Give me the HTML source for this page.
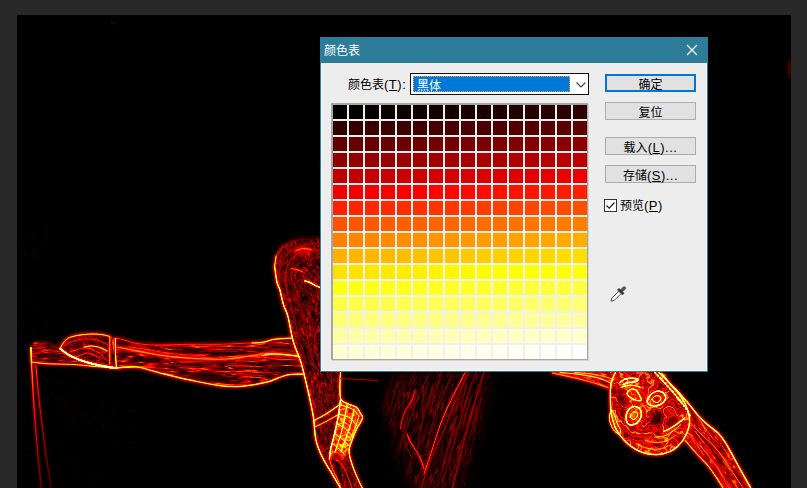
<!DOCTYPE html>
<html lang="zh-CN">
<head>
<meta charset="utf-8">
<title>颜色表</title>
<style>
html,body{margin:0;padding:0;}
body{width:807px;height:488px;overflow:hidden;background:#282828;position:relative;
  font-family:"Liberation Sans","Noto Sans CJK SC",sans-serif;font-size:12px;color:#000;}
#canvas{position:absolute;left:17px;top:15px;width:774px;height:473px;background:#000;overflow:hidden;}
#art{position:absolute;left:0;top:0;width:807px;height:488px;}
#dlg{position:absolute;left:320px;top:37px;width:386px;height:333px;border:1px solid #2d7d9a;background:#ededed;box-shadow:inset 1px 0 0 #fafafa,inset -1px 0 0 #fafafa,inset 0 -1px 0 #fafafa;}
#ttl{position:absolute;left:0;top:0;width:386px;height:25px;background:#2d7d9a;color:#fff;}
#ttl span{position:absolute;left:3px;top:5px;line-height:16px;font-size:12px;}
#ttl svg{position:absolute;left:365px;top:6px;}
.lbl{position:absolute;line-height:16px;white-space:nowrap;}
.btn{position:absolute;left:284px;width:89px;height:16px;border:1px solid #adadad;background:#e1e1e1;
  text-align:center;line-height:21px;white-space:nowrap;}
.btn.def{border:2px solid #0078d7;width:87px;height:14px;line-height:19px;}
.lat{font-size:13px;letter-spacing:0.5px;}
u{text-decoration:underline;text-underline-offset:1px;}
#sel{position:absolute;left:89px;top:35px;width:177px;height:20px;border:1px solid #111;background:#fff;}
#sel .hl{position:absolute;left:2px;top:2px;width:157px;height:16px;background:#0078d7;color:#fff;line-height:20px;overflow:hidden;
  outline:1px dotted #f0a050;outline-offset:-1px;}
#sel .hl span{padding-left:4px;}
#sel svg{position:absolute;left:165px;top:8px;}
#grid{position:absolute;left:10px;top:65px;width:258px;height:258px;border-top:2px solid #a6a6a6;border-left:2px solid #a6a6a6;
  border-right:1px solid #a6a6a6;border-bottom:1px solid #a6a6a6;background:#f0f0f0;box-sizing:border-box;width:257px !important;height:257px !important;box-shadow:1px 1px 0 #d4d4d4;}
#grid svg{position:absolute;left:0;top:0;}
#chk{position:absolute;left:283px;top:161px;width:11px;height:11px;border:1px solid #333;background:#fff;}
#chk svg{position:absolute;left:0;top:0;}
</style>
</head>
<body>
<div id="canvas"></div>
<svg id="art" width="807" height="488" viewBox="0 0 807 488">
<defs><filter id="b1" x="-20%" y="-20%" width="140%" height="140%"><feGaussianBlur stdDeviation="1"/></filter><filter id="b2" x="-20%" y="-20%" width="140%" height="140%"><feGaussianBlur stdDeviation="2.2"/></filter><filter id="b05" x="-20%" y="-20%" width="140%" height="140%"><feGaussianBlur stdDeviation="0.5"/></filter><filter id="b03" x="-20%" y="-20%" width="140%" height="140%"><feGaussianBlur stdDeviation="0.3"/></filter><clipPath id="c_vamp"><path d="M340.4 400.0 L347.8 403.7 L356.4 407.3 L362.5 418.4 L356.4 429.5 L351.5 441.8 L349.0 451.6 L341.0 463.0 L329.3 459.0 L330.6 449.0 L335.5 429.5Z"/></clipPath><clipPath id="c_tutu"><path d="M400.0 372.0 L492.0 372.0 L462.0 488.0 L415.0 488.0 L395.0 440.0 L385.0 405.0Z"/></clipPath><clipPath id="c_leg"><path d="M115.5 338.4 L119.0 338.6 L123.8 339.9 L137.2 343.6 L159.5 345.1 L189.2 344.3 L220.0 344.3 L245.0 343.2 L262.5 342.3 L274.8 339.2 L291.0 338.2 L293.2 341.2 L301.4 363.8 L303.4 374.0 L287.0 375.0 L266.5 382.2 L242.0 386.3 L221.5 385.9 L190.7 380.2 L160.0 373.0 L137.0 367.0 L116.5 368.0Z"/></clipPath><clipPath id="c_shoe"><path d="M60.2 348.7 L63.5 342.5 L69.4 337.6 L80.0 335.0 L92.0 334.0 L102.0 334.6 L109.6 336.4 L109.8 364.0 L116.5 368.2 L103.0 366.0 L90.0 363.0 L77.6 359.0 L68.0 354.5 L60.2 348.7Z"/></clipPath><clipPath id="c_toe"><path d="M31.0 348.0 L35.6 342.8 L48.0 344.0 L60.2 348.7 L68.0 354.5 L77.6 359.0 L92.0 364.0 L100.0 366.5 L78.0 364.8 L65.3 364.0 L45.0 363.6 L31.5 362.0Z"/></clipPath><clipPath id="c_body"><path d="M300.8 239.8 L291.0 242.0 L282.8 246.3 L276.2 256.1 L274.6 266.0 L277.0 282.4 L279.9 290.0 L283.6 305.0 L288.0 316.6 L293.2 341.2 L301.4 363.8 L308.4 392.6 L320.0 392.0 L320.0 239.0Z"/></clipPath><clipPath id="c_foot"><path d="M302.3 371.0 L308.4 392.6 L313.4 417.2 L315.8 439.3 L322.0 456.5 L330.6 471.3 L340.5 488.0 L362.5 488.0 L362.5 488.0 L360.0 483.6 L352.7 466.4 L349.0 451.6 L351.5 441.8 L356.4 429.5 L362.5 418.4 L360.0 412.5 L356.4 407.3 L347.8 403.7 L340.4 397.5 L340.4 372.0Z"/></clipPath><clipPath id="c_head"><path d="M615.4 372.6 C607.1 373.7 612.8 377.6 612.0 380.0 C611.2 382.4 610.9 384.5 610.6 387.3 C610.3 390.1 610.4 393.8 610.4 397.0 C610.4 400.2 610.3 403.2 610.6 406.5 C610.9 409.8 611.3 413.6 612.0 417.0 C612.7 420.4 613.8 424.1 615.0 427.0 C616.2 429.9 617.8 432.1 619.5 434.5 C621.2 436.9 623.2 439.3 625.0 441.2 C626.8 443.1 628.6 444.6 630.5 446.0 C632.4 447.4 634.7 448.8 636.6 449.9 C638.5 450.9 640.1 451.6 642.0 452.3 C643.9 453.0 645.9 453.5 648.2 453.9 C650.5 454.3 653.4 454.6 656.0 454.6 C658.6 454.6 661.1 454.3 663.6 453.7 C666.1 453.1 668.8 452.1 671.0 451.0 C673.2 449.9 675.2 448.6 677.0 447.0 C678.8 445.4 680.5 443.4 682.0 441.5 C683.5 439.6 684.7 437.5 685.7 435.4 C686.8 433.3 687.6 431.2 688.3 429.0 C688.9 426.8 689.5 424.2 689.6 422.0 C689.8 419.8 689.5 417.9 689.2 416.0 C688.9 414.1 688.4 412.5 687.7 410.4 C687.0 408.3 686.1 405.8 685.0 403.5 C683.9 401.2 682.4 399.0 681.0 396.9 C679.6 394.8 678.1 392.9 676.5 391.0 C674.9 389.1 673.0 387.2 671.3 385.3 C669.6 383.4 668.1 381.4 666.5 379.5 C664.9 377.6 670.2 374.8 661.7 373.6 C653.2 372.5 623.7 371.5 615.4 372.6Z"/></clipPath><clipPath id="c_hair"><path d="M552.0 372.0 L616.0 372.0 L612.0 380.0 L609.0 388.5 L596.0 383.5 L581.0 379.3 L566.0 376.0 L552.0 373.2Z"/></clipPath><clipPath id="c_arm"><path d="M658.9 372.6 L668.0 381.5 L677.8 391.4 L688.0 403.0 L698.0 415.4 L708.0 425.0 L718.0 433.0 L725.0 442.0 L730.7 451.9 L740.0 469.0 L750.8 488.0 L723.0 488.0 L723.0 488.0 L716.0 477.0 L708.0 465.8 L696.0 453.0 L685.3 440.6 L690.6 422.4 L687.5 406.0 L673.2 387.5Z"/></clipPath><clipPath id="c_strip"><path d="M109.8 336.4 L115.5 338.4 L116.5 368.2 L109.8 364.0Z"/></clipPath><clipPath id="c_canvas"><rect x="17" y="15" width="774" height="473"/></clipPath><filter id="fd" x="0" y="0" width="100%" height="100%" color-interpolation-filters="sRGB"><feTurbulence type="fractalNoise" baseFrequency="0.012 0.2" numOctaves="3" seed="4"/><feColorMatrix type="matrix" values="1 0 0 0 0 1 0 0 0 0 1 0 0 0 0 0 0 0 0 1"/><feComponentTransfer result="c"><feFuncR type="table" tableValues=".06 .06 .06 .06 .06 .06 .06 .06 .06 .06 .06 .06 .06 .06 .06 .06 .06 .08 .16 .24 .28 .20 .12 .06 .06 .06 .06 .06 .21 .35 .50 .35 .21 .06 .06 .06 .10 .18 .25 .24 .16 .09 .06 .06 .06 .06 .06 .06 .06 .06 .06 .06 .06 .06 .06 .06 .06 .06 .06 .06 .06"/><feFuncG type="table" tableValues=".06 .06 .06 .06 .06 .06 .06 .06 .06 .06 .06 .06 .06 .06 .06 .06 .06 .08 .16 .24 .28 .20 .12 .06 .06 .06 .06 .06 .21 .35 .50 .35 .21 .06 .06 .06 .10 .18 .25 .24 .16 .09 .06 .06 .06 .06 .06 .06 .06 .06 .06 .06 .06 .06 .06 .06 .06 .06 .06 .06 .06"/><feFuncB type="table" tableValues=".06 .06 .06 .06 .06 .06 .06 .06 .06 .06 .06 .06 .06 .06 .06 .06 .06 .08 .16 .24 .28 .20 .12 .06 .06 .06 .06 .06 .21 .35 .50 .35 .21 .06 .06 .06 .10 .18 .25 .24 .16 .09 .06 .06 .06 .06 .06 .06 .06 .06 .06 .06 .06 .06 .06 .06 .06 .06 .06 .06 .06"/></feComponentTransfer><feComposite in2="SourceGraphic" operator="in"/></filter><filter id="fdf" x="-20%" y="-20%" width="140%" height="140%" color-interpolation-filters="sRGB"><feTurbulence type="fractalNoise" baseFrequency="0.012 0.2" numOctaves="3" seed="6"/><feColorMatrix type="matrix" values="1 0 0 0 0 1 0 0 0 0 1 0 0 0 0 0 0 0 0 1"/><feComponentTransfer result="c"><feFuncR type="table" tableValues=".02 .02 .02 .02 .02 .02 .02 .02 .02 .02 .02 .02 .02 .02 .02 .02 .02 .03 .06 .10 .12 .09 .05 .02 .02 .02 .02 .02 .08 .14 .20 .14 .08 .02 .02 .02 .04 .06 .09 .08 .06 .03 .02 .02 .02 .02 .02 .02 .02 .02 .02 .02 .02 .02 .02 .02 .02 .02 .02 .02 .02"/><feFuncG type="table" tableValues=".02 .02 .02 .02 .02 .02 .02 .02 .02 .02 .02 .02 .02 .02 .02 .02 .02 .03 .06 .10 .12 .09 .05 .02 .02 .02 .02 .02 .08 .14 .20 .14 .08 .02 .02 .02 .04 .06 .09 .08 .06 .03 .02 .02 .02 .02 .02 .02 .02 .02 .02 .02 .02 .02 .02 .02 .02 .02 .02 .02 .02"/><feFuncB type="table" tableValues=".02 .02 .02 .02 .02 .02 .02 .02 .02 .02 .02 .02 .02 .02 .02 .02 .02 .03 .06 .10 .12 .09 .05 .02 .02 .02 .02 .02 .08 .14 .20 .14 .08 .02 .02 .02 .04 .06 .09 .08 .06 .03 .02 .02 .02 .02 .02 .02 .02 .02 .02 .02 .02 .02 .02 .02 .02 .02 .02 .02 .02"/></feComponentTransfer><feGaussianBlur in="SourceGraphic" stdDeviation="7" result="m"/><feComposite in="c" in2="m" operator="in"/></filter><filter id="fb" x="0" y="0" width="100%" height="100%" color-interpolation-filters="sRGB"><feTurbulence type="fractalNoise" baseFrequency="0.02 0.2" numOctaves="3" seed="9"/><feColorMatrix type="matrix" values="1 0 0 0 0 1 0 0 0 0 1 0 0 0 0 0 0 0 0 1"/><feComponentTransfer result="c"><feFuncR type="table" tableValues=".11 .11 .11 .11 .11 .11 .11 .11 .11 .11 .11 .11 .11 .11 .11 .11 .11 .15 .23 .31 .36 .28 .20 .12 .17 .24 .20 .15 .29 .42 .56 .42 .29 .17 .24 .20 .18 .27 .35 .33 .25 .17 .11 .11 .11 .11 .11 .11 .11 .11 .11 .11 .11 .11 .11 .11 .11 .11 .11 .11 .11"/><feFuncG type="table" tableValues=".11 .11 .11 .11 .11 .11 .11 .11 .11 .11 .11 .11 .11 .11 .11 .11 .11 .15 .23 .31 .36 .28 .20 .12 .17 .24 .20 .15 .29 .42 .56 .42 .29 .17 .24 .20 .18 .27 .35 .33 .25 .17 .11 .11 .11 .11 .11 .11 .11 .11 .11 .11 .11 .11 .11 .11 .11 .11 .11 .11 .11"/><feFuncB type="table" tableValues=".11 .11 .11 .11 .11 .11 .11 .11 .11 .11 .11 .11 .11 .11 .11 .11 .11 .15 .23 .31 .36 .28 .20 .12 .17 .24 .20 .15 .29 .42 .56 .42 .29 .17 .24 .20 .18 .27 .35 .33 .25 .17 .11 .11 .11 .11 .11 .11 .11 .11 .11 .11 .11 .11 .11 .11 .11 .11 .11 .11 .11"/></feComponentTransfer><feComposite in2="SourceGraphic" operator="in"/></filter><filter id="fi" x="0" y="0" width="100%" height="100%" color-interpolation-filters="sRGB"><feTurbulence type="fractalNoise" baseFrequency="0.06 0.06" numOctaves="3" seed="5"/><feColorMatrix type="matrix" values="1 0 0 0 0 1 0 0 0 0 1 0 0 0 0 0 0 0 0 1"/><feComponentTransfer result="c"><feFuncR type="table" tableValues=".16 .16 .16 .16 .16 .16 .16 .16 .16 .16 .16 .16 .16 .16 .16 .16 .16 .18 .26 .34 .38 .30 .22 .16 .22 .29 .25 .18 .31 .45 .60 .45 .31 .22 .29 .25 .21 .29 .37 .35 .27 .19 .16 .16 .16 .16 .16 .16 .16 .16 .16 .16 .16 .16 .16 .16 .16 .16 .16 .16 .16"/><feFuncG type="table" tableValues=".16 .16 .16 .16 .16 .16 .16 .16 .16 .16 .16 .16 .16 .16 .16 .16 .16 .18 .26 .34 .38 .30 .22 .16 .22 .29 .25 .18 .31 .45 .60 .45 .31 .22 .29 .25 .21 .29 .37 .35 .27 .19 .16 .16 .16 .16 .16 .16 .16 .16 .16 .16 .16 .16 .16 .16 .16 .16 .16 .16 .16"/><feFuncB type="table" tableValues=".16 .16 .16 .16 .16 .16 .16 .16 .16 .16 .16 .16 .16 .16 .16 .16 .16 .18 .26 .34 .38 .30 .22 .16 .22 .29 .25 .18 .31 .45 .60 .45 .31 .22 .29 .25 .21 .29 .37 .35 .27 .19 .16 .16 .16 .16 .16 .16 .16 .16 .16 .16 .16 .16 .16 .16 .16 .16 .16 .16 .16"/></feComponentTransfer><feComposite in2="SourceGraphic" operator="in"/></filter><filter id="fv" x="0" y="0" width="100%" height="100%" color-interpolation-filters="sRGB"><feTurbulence type="fractalNoise" baseFrequency="0.075 0.075" numOctaves="3" seed="8"/><feColorMatrix type="matrix" values="1 0 0 0 0 1 0 0 0 0 1 0 0 0 0 0 0 0 0 1"/><feComponentTransfer result="c"><feFuncR type="table" tableValues=".22 .22 .22 .22 .22 .22 .22 .22 .22 .22 .22 .22 .22 .22 .22 .22 .22 .24 .35 .46 .53 .42 .31 .22 .31 .40 .34 .25 .41 .59 .78 .59 .41 .31 .40 .34 .29 .40 .51 .48 .37 .26 .22 .22 .22 .22 .22 .22 .22 .22 .22 .22 .22 .22 .22 .22 .22 .22 .22 .22 .22"/><feFuncG type="table" tableValues=".22 .22 .22 .22 .22 .22 .22 .22 .22 .22 .22 .22 .22 .22 .22 .22 .22 .24 .35 .46 .53 .42 .31 .22 .31 .40 .34 .25 .41 .59 .78 .59 .41 .31 .40 .34 .29 .40 .51 .48 .37 .26 .22 .22 .22 .22 .22 .22 .22 .22 .22 .22 .22 .22 .22 .22 .22 .22 .22 .22 .22"/><feFuncB type="table" tableValues=".22 .22 .22 .22 .22 .22 .22 .22 .22 .22 .22 .22 .22 .22 .22 .22 .22 .24 .35 .46 .53 .42 .31 .22 .31 .40 .34 .25 .41 .59 .78 .59 .41 .31 .40 .34 .29 .40 .51 .48 .37 .26 .22 .22 .22 .22 .22 .22 .22 .22 .22 .22 .22 .22 .22 .22 .22 .22 .22 .22 .22"/></feComponentTransfer><feComposite in2="SourceGraphic" operator="in"/></filter><filter id="fs" x="0" y="0" width="100%" height="100%" color-interpolation-filters="sRGB"><feTurbulence type="fractalNoise" baseFrequency="0.04 0.13" numOctaves="3" seed="11"/><feColorMatrix type="matrix" values="1 0 0 0 0 1 0 0 0 0 1 0 0 0 0 0 0 0 0 1"/><feComponentTransfer result="c"><feFuncR type="table" tableValues=".04 .04 .04 .04 .04 .04 .04 .04 .04 .04 .04 .04 .04 .04 .04 .04 .04 .04 .09 .17 .22 .14 .05 .04 .08 .14 .11 .05 .09 .22 .36 .22 .09 .08 .14 .11 .05 .12 .21 .19 .10 .04 .04 .04 .04 .04 .04 .04 .04 .04 .04 .04 .04 .04 .04 .04 .04 .04 .04 .04 .04"/><feFuncG type="table" tableValues=".04 .04 .04 .04 .04 .04 .04 .04 .04 .04 .04 .04 .04 .04 .04 .04 .04 .04 .09 .17 .22 .14 .05 .04 .08 .14 .11 .05 .09 .22 .36 .22 .09 .08 .14 .11 .05 .12 .21 .19 .10 .04 .04 .04 .04 .04 .04 .04 .04 .04 .04 .04 .04 .04 .04 .04 .04 .04 .04 .04 .04"/><feFuncB type="table" tableValues=".04 .04 .04 .04 .04 .04 .04 .04 .04 .04 .04 .04 .04 .04 .04 .04 .04 .04 .09 .17 .22 .14 .05 .04 .08 .14 .11 .05 .09 .22 .36 .22 .09 .08 .14 .11 .05 .12 .21 .19 .10 .04 .04 .04 .04 .04 .04 .04 .04 .04 .04 .04 .04 .04 .04 .04 .04 .04 .04 .04 .04"/></feComponentTransfer><feComposite in2="SourceGraphic" operator="in"/></filter><filter id="fj" x="0" y="0" width="100%" height="100%" color-interpolation-filters="sRGB"><feTurbulence type="fractalNoise" baseFrequency="0.07 0.1" numOctaves="3" seed="2"/><feColorMatrix type="matrix" values="1 0 0 0 0 1 0 0 0 0 1 0 0 0 0 0 0 0 0 1"/><feComponentTransfer result="c"><feFuncR type="table" tableValues=".08 .08 .08 .08 .08 .08 .08 .08 .08 .08 .08 .08 .08 .08 .08 .08 .08 .10 .19 .28 .33 .24 .15 .08 .08 .08 .08 .08 .22 .36 .50 .36 .22 .08 .08 .08 .13 .22 .31 .30 .21 .12 .08 .08 .08 .08 .08 .08 .08 .08 .08 .08 .08 .08 .08 .08 .08 .08 .08 .08 .08"/><feFuncG type="table" tableValues=".08 .08 .08 .08 .08 .08 .08 .08 .08 .08 .08 .08 .08 .08 .08 .08 .08 .10 .19 .28 .33 .24 .15 .08 .08 .08 .08 .08 .22 .36 .50 .36 .22 .08 .08 .08 .13 .22 .31 .30 .21 .12 .08 .08 .08 .08 .08 .08 .08 .08 .08 .08 .08 .08 .08 .08 .08 .08 .08 .08 .08"/><feFuncB type="table" tableValues=".08 .08 .08 .08 .08 .08 .08 .08 .08 .08 .08 .08 .08 .08 .08 .08 .08 .10 .19 .28 .33 .24 .15 .08 .08 .08 .08 .08 .22 .36 .50 .36 .22 .08 .08 .08 .13 .22 .31 .30 .21 .12 .08 .08 .08 .08 .08 .08 .08 .08 .08 .08 .08 .08 .08 .08 .08 .08 .08 .08 .08"/></feComponentTransfer><feComposite in2="SourceGraphic" operator="in"/></filter><linearGradient id="pg" gradientUnits="userSpaceOnUse" x1="0" y1="347" x2="0" y2="488"><stop offset="0" stop-color="#dadada"/><stop offset="0.09" stop-color="#b5b5b5"/><stop offset="0.14" stop-color="#838383"/><stop offset="0.35" stop-color="#656565"/><stop offset="0.6" stop-color="#434343"/><stop offset="1" stop-color="#202020"/></linearGradient><linearGradient id="pg2" gradientUnits="userSpaceOnUse" x1="0" y1="347" x2="0" y2="488"><stop offset="0" stop-color="#707070"/><stop offset="0.4" stop-color="#454545"/><stop offset="1" stop-color="#151515"/></linearGradient><linearGradient id="pg3" gradientUnits="userSpaceOnUse" x1="0" y1="365" x2="0" y2="488"><stop offset="0" stop-color="#787878"/><stop offset="0.3" stop-color="#555555"/><stop offset="0.6" stop-color="#383838"/><stop offset="1" stop-color="#1b1b1b"/></linearGradient><filter id="bb" filterUnits="userSpaceOnUse" x="17" y="15" width="774" height="473" color-interpolation-filters="sRGB"><feComponentTransfer><feFuncR type="table" tableValues="0 1 1 1"/><feFuncG type="table" tableValues="0 0 1 1"/><feFuncB type="table" tableValues="0 0 0 1"/></feComponentTransfer></filter></defs><g clip-path="url(#c_canvas)"><g filter="url(#bb)"><rect x="17" y="15" width="774" height="473" fill="#000"/><g fill="none" stroke="#0f0f0f" stroke-width="0.8" opacity="0.35"><rect x="75" y="409" width="3" height="3"/><rect x="60" y="358" width="2" height="2"/><rect x="87" y="432" width="2" height="2"/><rect x="21" y="455" width="7" height="3"/><rect x="94" y="357" width="5" height="2"/><rect x="50" y="349" width="2" height="6"/><rect x="33" y="254" width="5" height="6"/><rect x="29" y="373" width="4" height="2"/><rect x="34" y="364" width="2" height="2"/><rect x="42" y="408" width="3" height="6"/><rect x="51" y="345" width="7" height="4"/><rect x="21" y="344" width="4" height="2"/><rect x="58" y="355" width="3" height="2"/><rect x="87" y="413" width="5" height="3"/><rect x="53" y="380" width="7" height="3"/><rect x="33" y="234" width="3" height="6"/><rect x="102" y="418" width="2" height="3"/><rect x="148" y="355" width="3" height="2"/><rect x="22" y="370" width="7" height="3"/><rect x="32" y="438" width="7" height="3"/><rect x="112" y="444" width="2" height="2"/><rect x="43" y="356" width="2" height="3"/><rect x="33" y="329" width="2" height="6"/><rect x="20" y="240" width="4" height="6"/><rect x="130" y="410" width="7" height="2"/><rect x="45" y="413" width="2" height="6"/><rect x="59" y="397" width="7" height="3"/><rect x="95" y="415" width="5" height="4"/><rect x="28" y="469" width="7" height="4"/><rect x="29" y="445" width="4" height="3"/><rect x="66" y="399" width="4" height="6"/><rect x="60" y="351" width="7" height="4"/><rect x="34" y="402" width="4" height="3"/><rect x="59" y="408" width="4" height="2"/><rect x="54" y="446" width="7" height="2"/><rect x="71" y="479" width="3" height="6"/><rect x="89" y="476" width="3" height="6"/><rect x="82" y="423" width="7" height="4"/><rect x="49" y="467" width="2" height="3"/><rect x="58" y="421" width="4" height="4"/><rect x="65" y="350" width="5" height="4"/><rect x="29" y="291" width="3" height="6"/><rect x="128" y="442" width="5" height="2"/><rect x="103" y="424" width="7" height="4"/><rect x="146" y="374" width="7" height="4"/><rect x="99" y="346" width="7" height="2"/><rect x="33" y="249" width="5" height="6"/><rect x="66" y="412" width="5" height="6"/><rect x="45" y="475" width="2" height="2"/><rect x="41" y="447" width="5" height="2"/><rect x="147" y="380" width="7" height="6"/><rect x="143" y="368" width="7" height="3"/><rect x="46" y="378" width="4" height="3"/><rect x="34" y="455" width="2" height="3"/><rect x="32" y="359" width="5" height="3"/><rect x="28" y="373" width="4" height="2"/><rect x="70" y="462" width="5" height="2"/><rect x="111" y="413" width="2" height="3"/><rect x="25" y="339" width="2" height="4"/><rect x="32" y="311" width="3" height="6"/><rect x="23" y="321" width="2" height="6"/><rect x="37" y="458" width="2" height="3"/><rect x="154" y="443" width="3" height="6"/><rect x="28" y="271" width="7" height="2"/><rect x="114" y="375" width="3" height="2"/><rect x="116" y="362" width="7" height="2"/><rect x="24" y="252" width="2" height="4"/><rect x="102" y="404" width="2" height="6"/><rect x="60" y="399" width="5" height="6"/><rect x="100" y="353" width="5" height="4"/><rect x="79" y="413" width="4" height="4"/><rect x="107" y="367" width="5" height="2"/><rect x="25" y="334" width="5" height="4"/><rect x="98" y="473" width="3" height="2"/><rect x="21" y="395" width="4" height="6"/><rect x="109" y="427" width="7" height="3"/><rect x="68" y="416" width="7" height="4"/><rect x="128" y="428" width="3" height="3"/><rect x="22" y="237" width="5" height="2"/><rect x="50" y="452" width="3" height="3"/><rect x="51" y="393" width="3" height="2"/><rect x="60" y="408" width="5" height="3"/><rect x="85" y="386" width="3" height="6"/><rect x="26" y="295" width="5" height="4"/><rect x="65" y="430" width="5" height="4"/><rect x="72" y="391" width="4" height="6"/><rect x="112" y="407" width="4" height="6"/><rect x="160" y="380" width="4" height="2"/><rect x="37" y="449" width="5" height="3"/><rect x="75" y="469" width="2" height="3"/></g><g filter="url(#b2)" fill="#262626" stroke="#262626" stroke-width="3"><path d="M115.5 338.4 L119.0 338.6 L123.8 339.9 L137.2 343.6 L159.5 345.1 L189.2 344.3 L220.0 344.3 L245.0 343.2 L262.5 342.3 L274.8 339.2 L291.0 338.2 L293.2 341.2 L301.4 363.8 L303.4 374.0 L287.0 375.0 L266.5 382.2 L242.0 386.3 L221.5 385.9 L190.7 380.2 L160.0 373.0 L137.0 367.0 L116.5 368.0Z"/><path d="M60.2 348.7 L63.5 342.5 L69.4 337.6 L80.0 335.0 L92.0 334.0 L102.0 334.6 L109.6 336.4 L109.8 364.0 L116.5 368.2 L103.0 366.0 L90.0 363.0 L77.6 359.0 L68.0 354.5 L60.2 348.7Z"/><path d="M31.0 348.0 L35.6 342.8 L48.0 344.0 L60.2 348.7 L68.0 354.5 L77.6 359.0 L92.0 364.0 L100.0 366.5 L78.0 364.8 L65.3 364.0 L45.0 363.6 L31.5 362.0Z"/><path d="M300.8 239.8 L291.0 242.0 L282.8 246.3 L276.2 256.1 L274.6 266.0 L277.0 282.4 L279.9 290.0 L283.6 305.0 L288.0 316.6 L293.2 341.2 L301.4 363.8 L308.4 392.6 L320.0 392.0 L320.0 239.0Z"/><path d="M302.3 371.0 L308.4 392.6 L313.4 417.2 L315.8 439.3 L322.0 456.5 L330.6 471.3 L340.5 488.0 L362.5 488.0 L362.5 488.0 L360.0 483.6 L352.7 466.4 L349.0 451.6 L351.5 441.8 L356.4 429.5 L362.5 418.4 L360.0 412.5 L356.4 407.3 L347.8 403.7 L340.4 397.5 L340.4 372.0Z"/><path d="M615.4 372.6 C607.1 373.7 612.8 377.6 612.0 380.0 C611.2 382.4 610.9 384.5 610.6 387.3 C610.3 390.1 610.4 393.8 610.4 397.0 C610.4 400.2 610.3 403.2 610.6 406.5 C610.9 409.8 611.3 413.6 612.0 417.0 C612.7 420.4 613.8 424.1 615.0 427.0 C616.2 429.9 617.8 432.1 619.5 434.5 C621.2 436.9 623.2 439.3 625.0 441.2 C626.8 443.1 628.6 444.6 630.5 446.0 C632.4 447.4 634.7 448.8 636.6 449.9 C638.5 450.9 640.1 451.6 642.0 452.3 C643.9 453.0 645.9 453.5 648.2 453.9 C650.5 454.3 653.4 454.6 656.0 454.6 C658.6 454.6 661.1 454.3 663.6 453.7 C666.1 453.1 668.8 452.1 671.0 451.0 C673.2 449.9 675.2 448.6 677.0 447.0 C678.8 445.4 680.5 443.4 682.0 441.5 C683.5 439.6 684.7 437.5 685.7 435.4 C686.8 433.3 687.6 431.2 688.3 429.0 C688.9 426.8 689.5 424.2 689.6 422.0 C689.8 419.8 689.5 417.9 689.2 416.0 C688.9 414.1 688.4 412.5 687.7 410.4 C687.0 408.3 686.1 405.8 685.0 403.5 C683.9 401.2 682.4 399.0 681.0 396.9 C679.6 394.8 678.1 392.9 676.5 391.0 C674.9 389.1 673.0 387.2 671.3 385.3 C669.6 383.4 668.1 381.4 666.5 379.5 C664.9 377.6 670.2 374.8 661.7 373.6 C653.2 372.5 623.7 371.5 615.4 372.6Z"/><path d="M552.0 372.0 L616.0 372.0 L612.0 380.0 L609.0 388.5 L596.0 383.5 L581.0 379.3 L566.0 376.0 L552.0 373.2Z"/><path d="M658.9 372.6 L668.0 381.5 L677.8 391.4 L688.0 403.0 L698.0 415.4 L708.0 425.0 L718.0 433.0 L725.0 442.0 L730.7 451.9 L740.0 469.0 L750.8 488.0 L723.0 488.0 L723.0 488.0 L716.0 477.0 L708.0 465.8 L696.0 453.0 L685.3 440.6 L690.6 422.4 L687.5 406.0 L673.2 387.5Z"/></g><g filter="url(#b1)"><path d="M115.5 338.4 L119.0 338.6 L123.8 339.9 L137.2 343.6 L159.5 345.1 L189.2 344.3 L220.0 344.3 L245.0 343.2 L262.5 342.3 L274.8 339.2 L291.0 338.2 L293.2 341.2 L301.4 363.8 L303.4 374.0 L287.0 375.0 L266.5 382.2 L242.0 386.3 L221.5 385.9 L190.7 380.2 L160.0 373.0 L137.0 367.0 L116.5 368.0Z" fill="#202020"/><path d="M60.2 348.7 L63.5 342.5 L69.4 337.6 L80.0 335.0 L92.0 334.0 L102.0 334.6 L109.6 336.4 L109.8 364.0 L116.5 368.2 L103.0 366.0 L90.0 363.0 L77.6 359.0 L68.0 354.5 L60.2 348.7Z" fill="#242424"/><path d="M31.0 348.0 L35.6 342.8 L48.0 344.0 L60.2 348.7 L68.0 354.5 L77.6 359.0 L92.0 364.0 L100.0 366.5 L78.0 364.8 L65.3 364.0 L45.0 363.6 L31.5 362.0Z" fill="#202020"/><path d="M109.8 336.4 L115.5 338.4 L116.5 368.2 L109.8 364.0Z" fill="#151515"/><path d="M300.8 239.8 L291.0 242.0 L282.8 246.3 L276.2 256.1 L274.6 266.0 L277.0 282.4 L279.9 290.0 L283.6 305.0 L288.0 316.6 L293.2 341.2 L301.4 363.8 L308.4 392.6 L320.0 392.0 L320.0 239.0Z" fill="#141414"/><path d="M302.3 371.0 L308.4 392.6 L313.4 417.2 L315.8 439.3 L322.0 456.5 L330.6 471.3 L340.5 488.0 L362.5 488.0 L362.5 488.0 L360.0 483.6 L352.7 466.4 L349.0 451.6 L351.5 441.8 L356.4 429.5 L362.5 418.4 L360.0 412.5 L356.4 407.3 L347.8 403.7 L340.4 397.5 L340.4 372.0Z" fill="#272727"/><path d="M615.4 372.6 C607.1 373.7 612.8 377.6 612.0 380.0 C611.2 382.4 610.9 384.5 610.6 387.3 C610.3 390.1 610.4 393.8 610.4 397.0 C610.4 400.2 610.3 403.2 610.6 406.5 C610.9 409.8 611.3 413.6 612.0 417.0 C612.7 420.4 613.8 424.1 615.0 427.0 C616.2 429.9 617.8 432.1 619.5 434.5 C621.2 436.9 623.2 439.3 625.0 441.2 C626.8 443.1 628.6 444.6 630.5 446.0 C632.4 447.4 634.7 448.8 636.6 449.9 C638.5 450.9 640.1 451.6 642.0 452.3 C643.9 453.0 645.9 453.5 648.2 453.9 C650.5 454.3 653.4 454.6 656.0 454.6 C658.6 454.6 661.1 454.3 663.6 453.7 C666.1 453.1 668.8 452.1 671.0 451.0 C673.2 449.9 675.2 448.6 677.0 447.0 C678.8 445.4 680.5 443.4 682.0 441.5 C683.5 439.6 684.7 437.5 685.7 435.4 C686.8 433.3 687.6 431.2 688.3 429.0 C688.9 426.8 689.5 424.2 689.6 422.0 C689.8 419.8 689.5 417.9 689.2 416.0 C688.9 414.1 688.4 412.5 687.7 410.4 C687.0 408.3 686.1 405.8 685.0 403.5 C683.9 401.2 682.4 399.0 681.0 396.9 C679.6 394.8 678.1 392.9 676.5 391.0 C674.9 389.1 673.0 387.2 671.3 385.3 C669.6 383.4 668.1 381.4 666.5 379.5 C664.9 377.6 670.2 374.8 661.7 373.6 C653.2 372.5 623.7 371.5 615.4 372.6Z" fill="#3f3f3f"/><path d="M552.0 372.0 L616.0 372.0 L612.0 380.0 L609.0 388.5 L596.0 383.5 L581.0 379.3 L566.0 376.0 L552.0 373.2Z" fill="#484848"/><path d="M658.9 372.6 L668.0 381.5 L677.8 391.4 L688.0 403.0 L698.0 415.4 L708.0 425.0 L718.0 433.0 L725.0 442.0 L730.7 451.9 L740.0 469.0 L750.8 488.0 L723.0 488.0 L723.0 488.0 L716.0 477.0 L708.0 465.8 L696.0 453.0 L685.3 440.6 L690.6 422.4 L687.5 406.0 L673.2 387.5Z" fill="#343434"/></g><path d="M400.0 372.0 L492.0 372.0 L462.0 488.0 L415.0 488.0 L395.0 440.0 L385.0 405.0Z" fill="#0b0b0b" opacity="0.5" filter="url(#b2)"/><g transform="rotate(106 440 430)" filter="url(#fdf)"><path transform="rotate(-106 440 430)" d="M400.0 372.0 L492.0 372.0 L462.0 488.0 L415.0 488.0 L395.0 440.0 L385.0 405.0Z" fill="#fff"/></g><g transform="rotate(2 200 360)" filter="url(#fd)"><path transform="rotate(-2 200 360)" d="M115.5 338.4 L119.0 338.6 L123.8 339.9 L137.2 343.6 L159.5 345.1 L189.2 344.3 L220.0 344.3 L245.0 343.2 L262.5 342.3 L274.8 339.2 L291.0 338.2 L293.2 341.2 L301.4 363.8 L303.4 374.0 L287.0 375.0 L266.5 382.2 L242.0 386.3 L221.5 385.9 L190.7 380.2 L160.0 373.0 L137.0 367.0 L116.5 368.0Z" fill="#fff"/></g><g transform="rotate(12 85 350)" filter="url(#fs)"><path transform="rotate(-12 85 350)" d="M60.2 348.7 L63.5 342.5 L69.4 337.6 L80.0 335.0 L92.0 334.0 L102.0 334.6 L109.6 336.4 L109.8 364.0 L116.5 368.2 L103.0 366.0 L90.0 363.0 L77.6 359.0 L68.0 354.5 L60.2 348.7Z" fill="#fff"/></g><g opacity="0.8"><g transform="rotate(4 60 355)" filter="url(#fd)"><path transform="rotate(-4 60 355)" d="M31.0 348.0 L35.6 342.8 L48.0 344.0 L60.2 348.7 L68.0 354.5 L77.6 359.0 L92.0 364.0 L100.0 366.5 L78.0 364.8 L65.3 364.0 L45.0 363.6 L31.5 362.0Z" fill="#fff"/></g></g><g transform="rotate(90 112 350)" filter="url(#fd)"><path transform="rotate(-90 112 350)" d="M109.8 336.4 L115.5 338.4 L116.5 368.2 L109.8 364.0Z" fill="#fff"/></g><g transform="rotate(72 300 310)" filter="url(#fs)"><path transform="rotate(-72 300 310)" d="M300.8 239.8 L291.0 242.0 L282.8 246.3 L276.2 256.1 L274.6 266.0 L277.0 282.4 L279.9 290.0 L283.6 305.0 L288.0 316.6 L293.2 341.2 L301.4 363.8 L308.4 392.6 L320.0 392.0 L320.0 239.0Z" fill="#fff"/></g><g transform="rotate(74 330 430)" filter="url(#fs)"><path transform="rotate(-74 330 430)" d="M302.3 371.0 L308.4 392.6 L313.4 417.2 L315.8 439.3 L322.0 456.5 L330.6 471.3 L340.5 488.0 L362.5 488.0 L362.5 488.0 L360.0 483.6 L352.7 466.4 L349.0 451.6 L351.5 441.8 L356.4 429.5 L362.5 418.4 L360.0 412.5 L356.4 407.3 L347.8 403.7 L340.4 397.5 L340.4 372.0Z" fill="#fff"/></g><g transform="rotate(70 345 430)" filter="url(#fv)"><path transform="rotate(-70 345 430)" d="M340.4 400.0 L347.8 403.7 L356.4 407.3 L362.5 418.4 L356.4 429.5 L351.5 441.8 L349.0 451.6 L341.0 463.0 L329.3 459.0 L330.6 449.0 L335.5 429.5Z" fill="#fff"/></g><g transform="rotate(0 650 410)" filter="url(#fi)"><path transform="rotate(0 650 410)" d="M615.4 372.6 C607.1 373.7 612.8 377.6 612.0 380.0 C611.2 382.4 610.9 384.5 610.6 387.3 C610.3 390.1 610.4 393.8 610.4 397.0 C610.4 400.2 610.3 403.2 610.6 406.5 C610.9 409.8 611.3 413.6 612.0 417.0 C612.7 420.4 613.8 424.1 615.0 427.0 C616.2 429.9 617.8 432.1 619.5 434.5 C621.2 436.9 623.2 439.3 625.0 441.2 C626.8 443.1 628.6 444.6 630.5 446.0 C632.4 447.4 634.7 448.8 636.6 449.9 C638.5 450.9 640.1 451.6 642.0 452.3 C643.9 453.0 645.9 453.5 648.2 453.9 C650.5 454.3 653.4 454.6 656.0 454.6 C658.6 454.6 661.1 454.3 663.6 453.7 C666.1 453.1 668.8 452.1 671.0 451.0 C673.2 449.9 675.2 448.6 677.0 447.0 C678.8 445.4 680.5 443.4 682.0 441.5 C683.5 439.6 684.7 437.5 685.7 435.4 C686.8 433.3 687.6 431.2 688.3 429.0 C688.9 426.8 689.5 424.2 689.6 422.0 C689.8 419.8 689.5 417.9 689.2 416.0 C688.9 414.1 688.4 412.5 687.7 410.4 C687.0 408.3 686.1 405.8 685.0 403.5 C683.9 401.2 682.4 399.0 681.0 396.9 C679.6 394.8 678.1 392.9 676.5 391.0 C674.9 389.1 673.0 387.2 671.3 385.3 C669.6 383.4 668.1 381.4 666.5 379.5 C664.9 377.6 670.2 374.8 661.7 373.6 C653.2 372.5 623.7 371.5 615.4 372.6Z" fill="#fff"/></g><g transform="rotate(14 585 378)" filter="url(#fb)"><path transform="rotate(-14 585 378)" d="M552.0 372.0 L616.0 372.0 L612.0 380.0 L609.0 388.5 L596.0 383.5 L581.0 379.3 L566.0 376.0 L552.0 373.2Z" fill="#fff"/></g><g transform="rotate(54 700 430)" filter="url(#fb)"><path transform="rotate(-54 700 430)" d="M658.9 372.6 L668.0 381.5 L677.8 391.4 L688.0 403.0 L698.0 415.4 L708.0 425.0 L718.0 433.0 L725.0 442.0 L730.7 451.9 L740.0 469.0 L750.8 488.0 L723.0 488.0 L723.0 488.0 L716.0 477.0 L708.0 465.8 L696.0 453.0 L685.3 440.6 L690.6 422.4 L687.5 406.0 L673.2 387.5Z" fill="#fff"/></g><g filter="url(#b1)"><ellipse cx="789.5" cy="69" rx="2" ry="10" fill="#181818"/><circle cx="112.7" cy="22.5" r="1.5" fill="#1b1b1b"/></g><g filter="url(#b2)"><ellipse cx="303" cy="252" rx="12" ry="6" fill="#656565" opacity="0.45"/><ellipse cx="642" cy="397" rx="15" ry="9" fill="#707070" opacity="0.35" transform="rotate(20 642 397)"/><ellipse cx="634" cy="414" rx="8" ry="9" fill="#707070" opacity="0.3"/><ellipse cx="656" cy="419" rx="8" ry="5.5" fill="#090909" opacity="0.7" transform="rotate(-20 656 419)"/><ellipse cx="622" cy="398" rx="5" ry="9" fill="#090909" opacity="0.5"/></g><g fill="none" stroke-linecap="round" stroke-linejoin="round"><g filter="url(#b1)"><path d="M303.4 374.0 C300.7 374.2 293.1 373.6 287.0 375.0 C280.9 376.4 274.0 380.3 266.5 382.2 C259.0 384.1 249.5 385.7 242.0 386.3 C234.5 386.9 230.1 386.9 221.5 385.9 C212.9 384.9 200.9 382.3 190.7 380.2 C180.4 378.1 168.9 375.2 160.0 373.0 C151.1 370.8 144.2 367.8 137.0 367.0 C129.8 366.2 119.9 367.8 116.5 368.0" stroke="#707070" stroke-width="2.5" opacity="0.75"/><path d="M115.5 338.4 C116.1 338.4 117.6 338.4 119.0 338.6 C120.4 338.9 120.8 339.1 123.8 339.9 C126.8 340.7 131.2 342.7 137.2 343.6 C143.1 344.5 150.8 345.0 159.5 345.1 C168.2 345.2 179.1 344.4 189.2 344.3 C199.3 344.2 210.7 344.5 220.0 344.3 C229.3 344.1 237.9 343.5 245.0 343.2 C252.1 342.9 257.5 343.0 262.5 342.3 C267.5 341.6 270.1 339.9 274.8 339.2 C279.6 338.5 288.3 338.4 291.0 338.2" stroke="#3b3b3b" stroke-width="2.2" opacity="0.68"/><path d="M117.8 347.3 C119.8 347.7 125.5 348.6 130.0 349.5 C134.5 350.4 137.2 351.2 144.6 352.5 C152.0 353.8 161.7 355.9 174.3 357.0 C186.9 358.1 207.1 359.4 220.0 359.2 C232.9 359.0 244.2 356.8 252.0 355.8 C259.8 354.9 261.0 353.7 266.5 353.5 C272.0 353.3 279.5 354.0 285.0 354.5 C290.5 355.0 296.9 356.2 299.3 356.6" stroke="#686868" stroke-width="4.0" opacity="0.75"/><path d="M129.7 346.8 C133.1 347.3 142.4 348.8 150.0 350.0 C157.6 351.2 165.8 353.1 175.0 354.0 C184.2 354.9 200.0 355.2 205.0 355.5" stroke="#505050" stroke-width="2.9" opacity="0.60"/><path d="M252.0 343.0 C253.8 342.9 258.7 342.9 262.5 342.3 C266.3 341.7 270.1 339.9 274.8 339.2 C279.6 338.5 288.3 338.4 291.0 338.2" stroke="#707070" stroke-width="2.3" opacity="0.75"/><path d="M262.0 355.5 C264.2 355.2 270.7 354.1 275.0 354.0 C279.3 353.9 283.9 354.6 288.0 355.0 C292.1 355.4 297.4 356.3 299.3 356.6" stroke="#707070" stroke-width="2.4" opacity="0.75"/><path d="M272.0 341.0 C271.0 342.5 268.3 346.5 266.0 350.0 C263.7 353.5 260.7 358.0 258.0 362.0 C255.3 366.0 251.8 370.3 250.0 374.0 C248.2 377.7 247.5 382.3 247.0 384.0" stroke="#2b2b2b" stroke-width="1.8" opacity="0.52"/><path d="M274.6 266.0 C275.0 268.7 276.1 278.4 277.0 282.4 C277.9 286.4 278.8 286.2 279.9 290.0 C281.0 293.8 282.2 300.6 283.6 305.0 C285.0 309.4 286.4 310.6 288.0 316.6 C289.6 322.6 291.0 333.3 293.2 341.2 C295.4 349.1 298.9 355.2 301.4 363.8 C303.9 372.4 306.4 383.7 308.4 392.6 C310.4 401.5 312.2 409.4 313.4 417.2 C314.6 425.0 314.4 432.8 315.8 439.3 C317.2 445.9 319.5 451.2 322.0 456.5 C324.5 461.8 327.5 466.1 330.6 471.3 C333.7 476.6 338.9 485.2 340.5 488.0" stroke="#737373" stroke-width="2.6" opacity="0.75"/><path d="M300.8 239.8 C299.2 240.2 294.0 240.9 291.0 242.0 C288.0 243.1 284.2 245.6 282.8 246.3" stroke="#202020" stroke-width="1.9" opacity="0.52"/><path d="M282.8 246.3 L276.2 256.1" stroke="#353535" stroke-width="2.2" opacity="0.75"/><path d="M276.2 256.1 L274.6 266.0" stroke="#6a6a6a" stroke-width="2.4" opacity="0.75"/><path d="M305.0 281.0 C305.7 281.2 307.5 281.6 309.0 282.2 C310.5 282.8 312.2 283.8 314.0 284.6 C315.8 285.5 318.8 286.9 319.7 287.3" stroke="#808080" stroke-width="2.4" opacity="0.75"/><path d="M320.0 243.0 C317.0 243.4 307.2 244.0 302.0 245.5 C296.8 247.0 292.5 249.1 289.0 252.0 C285.5 254.9 282.6 258.7 281.0 263.0 C279.4 267.3 279.8 275.5 279.5 278.0" stroke="#252525" stroke-width="1.9" opacity="0.60"/><path d="M320.0 250.0 C317.3 250.2 308.3 250.3 304.0 251.5 C299.7 252.7 296.8 254.4 294.0 257.0 C291.2 259.6 288.4 262.8 287.0 267.0 C285.6 271.2 285.3 277.2 285.5 282.0 C285.7 286.8 287.6 293.7 288.0 296.0" stroke="#2b2b2b" stroke-width="2.0" opacity="0.60"/><path d="M320.0 258.0 C317.7 258.2 309.8 257.8 306.0 259.0 C302.2 260.2 299.3 262.3 297.0 265.0 C294.7 267.7 292.7 270.8 292.0 275.0 C291.3 279.2 292.2 285.2 293.0 290.0 C293.8 294.8 296.3 301.7 297.0 304.0" stroke="#252525" stroke-width="1.7" opacity="0.56"/><path d="M296.0 250.5 C297.2 250.2 300.5 248.7 303.0 248.5 C305.5 248.3 309.7 249.3 311.0 249.5" stroke="#606060" stroke-width="2.9" opacity="0.75"/><path d="M291.0 268.5 C292.0 268.7 295.0 268.9 297.0 269.5 C299.0 270.1 302.0 271.6 303.0 272.0" stroke="#535353" stroke-width="2.4" opacity="0.75"/><path d="M300.0 276.0 C301.3 276.5 305.3 277.5 308.0 279.0 C310.7 280.5 314.0 283.2 316.0 285.0 C318.0 286.8 319.3 289.2 320.0 290.0" stroke="#252525" stroke-width="1.7" opacity="0.60"/><path d="M296.0 296.0 C297.0 298.7 300.3 306.3 302.0 312.0 C303.7 317.7 304.7 323.7 306.0 330.0 C307.3 336.3 308.5 343.7 310.0 350.0 C311.5 356.3 314.2 365.0 315.0 368.0" stroke="#202020" stroke-width="1.7" opacity="0.52"/><path d="M305.0 300.0 C306.0 303.0 309.3 311.7 311.0 318.0 C312.7 324.3 313.7 331.7 315.0 338.0 C316.3 344.3 318.3 353.0 319.0 356.0" stroke="#202020" stroke-width="1.7" opacity="0.49"/><path d="M289.0 300.0 C289.8 303.0 292.3 311.7 294.0 318.0 C295.7 324.3 297.2 331.3 299.0 338.0 C300.8 344.7 304.0 354.7 305.0 358.0" stroke="#202020" stroke-width="1.6" opacity="0.49"/><path d="M60.2 348.7 C60.8 347.7 62.0 344.4 63.5 342.5 C65.0 340.6 66.7 338.9 69.4 337.6 C72.2 336.4 76.2 335.6 80.0 335.0 C83.8 334.4 88.3 334.1 92.0 334.0 C95.7 333.9 99.1 334.2 102.0 334.6 C104.9 335.0 108.3 336.1 109.6 336.4" stroke="#707070" stroke-width="2.3" opacity="0.75"/><path d="M109.8 336.4 C109.8 338.7 109.8 345.4 109.8 350.0 C109.8 354.6 109.8 361.7 109.8 364.0" stroke="#6a6a6a" stroke-width="2.0" opacity="0.75"/><path d="M115.5 338.4 C115.5 340.7 115.2 347.0 115.4 352.0 C115.6 357.0 116.3 365.5 116.5 368.2" stroke="#707070" stroke-width="2.2" opacity="0.75"/><path d="M60.2 348.7 C61.5 349.7 65.1 352.8 68.0 354.5 C70.9 356.2 73.9 357.6 77.6 359.0 C81.3 360.4 85.8 361.8 90.0 363.0 C94.2 364.2 98.6 365.1 103.0 366.0 C107.4 366.9 114.2 367.8 116.5 368.2" stroke="#858585" stroke-width="2.9" opacity="0.75"/><path d="M31.5 362.0 C33.8 362.3 39.4 363.2 45.0 363.6 C50.6 364.0 59.5 364.0 65.3 364.2 C71.1 364.4 75.0 364.6 80.0 365.0 C85.0 365.4 88.9 366.0 95.0 366.5 C101.1 367.0 112.9 367.9 116.5 368.2" stroke="#6a6a6a" stroke-width="2.2" opacity="0.75"/><path d="M34.0 343.5 C34.3 343.4 35.1 342.9 35.6 342.8 C36.1 342.8 36.8 343.1 37.0 343.2" stroke="#3b3b3b" stroke-width="1.9" opacity="0.75"/><path d="M64.0 346.0 C65.3 345.2 68.7 342.7 72.0 341.5 C75.3 340.3 79.8 339.2 84.0 339.0 C88.2 338.8 93.0 339.0 97.0 340.0 C101.0 341.0 106.2 344.2 108.0 345.0" stroke="#3b3b3b" stroke-width="1.7" opacity="0.64"/><path d="M84.0 347.0 C85.3 346.8 89.3 345.9 92.0 346.0 C94.7 346.1 97.5 346.7 100.0 347.5 C102.5 348.3 105.8 350.4 107.0 351.0" stroke="#656565" stroke-width="2.6" opacity="0.75"/><path d="M70.0 352.0 C72.5 351.3 80.3 348.0 85.0 348.0 C89.7 348.0 94.5 350.0 98.0 352.0 C101.5 354.0 104.7 358.7 106.0 360.0" stroke="#3b3b3b" stroke-width="1.6" opacity="0.60"/><path d="M76.0 357.0 C78.0 356.3 84.2 352.8 88.0 353.0 C91.8 353.2 97.2 357.2 99.0 358.0" stroke="#3b3b3b" stroke-width="1.4" opacity="0.60"/><path d="M340.4 372.0 C340.4 376.2 339.2 392.2 340.4 397.5 C341.6 402.8 345.1 402.1 347.8 403.7 C350.5 405.3 354.4 405.8 356.4 407.3 C358.4 408.8 359.0 410.6 360.0 412.5 C361.0 414.4 363.1 415.6 362.5 418.4 C361.9 421.2 358.2 425.6 356.4 429.5 C354.6 433.4 352.7 438.1 351.5 441.8 C350.3 445.5 348.8 447.5 349.0 451.6 C349.2 455.7 350.9 461.1 352.7 466.4 C354.5 471.7 358.4 480.0 360.0 483.6 C361.6 487.2 362.1 487.3 362.5 488.0" stroke="#707070" stroke-width="2.3" opacity="0.75"/><path d="M313.4 420.9 C315.5 419.8 321.7 416.7 326.0 414.0 C330.3 411.3 337.0 406.4 339.2 404.9" stroke="#707070" stroke-width="2.3" opacity="0.75"/><path d="M314.6 427.0 C316.5 426.1 322.1 423.6 326.0 421.5 C329.9 419.4 336.0 415.8 338.0 414.7" stroke="#707070" stroke-width="2.2" opacity="0.75"/><path d="M340.4 400.0 C340.1 402.5 339.3 410.1 338.5 415.0 C337.7 419.9 336.4 425.3 335.5 429.5 C334.6 433.7 333.8 436.8 333.0 440.0 C332.2 443.2 331.2 445.8 330.6 449.0 C330.0 452.2 329.5 457.3 329.3 459.0" stroke="#757575" stroke-width="2.3" opacity="0.75"/><path d="M341.0 405.0 C342.8 405.7 349.0 407.2 352.0 409.0 C355.0 410.8 357.8 414.8 359.0 416.0" stroke="#707070" stroke-width="1.9" opacity="0.75"/><path d="M339.0 414.0 C340.8 414.7 347.0 416.0 350.0 418.0 C353.0 420.0 355.8 424.7 357.0 426.0" stroke="#707070" stroke-width="1.9" opacity="0.75"/><path d="M337.0 424.0 C338.5 424.8 343.3 426.8 346.0 429.0 C348.7 431.2 351.8 435.7 353.0 437.0" stroke="#707070" stroke-width="1.9" opacity="0.75"/><path d="M335.0 434.0 C336.2 434.8 339.7 437.0 342.0 439.0 C344.3 441.0 347.8 444.8 349.0 446.0" stroke="#707070" stroke-width="1.9" opacity="0.75"/><path d="M333.0 444.0 C334.0 444.8 337.0 447.2 339.0 449.0 C341.0 450.8 344.0 454.0 345.0 455.0" stroke="#707070" stroke-width="1.7" opacity="0.75"/><path d="M347.0 405.0 C346.5 407.7 345.2 415.7 344.0 421.0 C342.8 426.3 341.5 431.8 340.0 437.0 C338.5 442.2 335.8 449.5 335.0 452.0" stroke="#707070" stroke-width="1.9" opacity="0.75"/><path d="M354.0 409.0 C353.5 411.3 352.3 418.2 351.0 423.0 C349.7 427.8 347.7 433.2 346.0 438.0 C344.3 442.8 341.8 449.7 341.0 452.0" stroke="#707070" stroke-width="1.9" opacity="0.75"/><path d="M359.0 416.0 C358.3 418.0 356.5 424.0 355.0 428.0 C353.5 432.0 350.8 438.0 350.0 440.0" stroke="#707070" stroke-width="1.7" opacity="0.75"/><path d="M329.3 459.0 C329.9 460.8 331.6 466.5 333.0 470.0 C334.4 473.5 336.7 477.0 338.0 480.0 C339.3 483.0 340.5 486.7 341.0 488.0" stroke="#505050" stroke-width="1.9" opacity="0.75"/><path d="M341.0 463.0 C341.8 464.5 344.2 467.8 346.0 472.0 C347.8 476.2 351.0 485.3 352.0 488.0" stroke="#484848" stroke-width="1.7" opacity="0.68"/><path d="M340.4 378.5 C342.8 378.6 348.7 378.9 355.0 379.2 C361.3 379.5 374.4 380.3 378.3 380.5" stroke="#202020" stroke-width="1.9" opacity="0.64"/><path d="M465.0 372.8 C462.8 377.0 456.0 389.7 452.0 398.0 C448.0 406.3 444.3 414.0 441.0 422.7 C437.7 431.4 434.8 441.4 432.0 450.0 C429.2 458.6 425.3 470.0 424.0 474.0" stroke="#3b3b3b" stroke-width="2.2" opacity="0.75"/><path d="M469.5 371.4 C467.1 376.5 459.2 392.2 455.0 402.0 C450.8 411.8 448.2 420.0 444.0 430.0 C439.8 440.0 433.8 452.3 430.0 462.0 C426.2 471.7 422.5 483.7 421.0 488.0" stroke="#252525" stroke-width="1.9" opacity="0.60"/><path d="M483.7 372.8 C482.1 378.2 477.4 393.0 474.0 405.0 C470.6 417.0 466.6 431.2 463.0 445.0 C459.4 458.8 454.2 480.8 452.4 488.0" stroke="#252525" stroke-width="2.0" opacity="0.64"/><path d="M476.0 372.0 C474.3 376.7 469.3 389.3 466.0 400.0 C462.7 410.7 459.7 423.0 456.0 436.0 C452.3 449.0 446.0 471.0 444.0 478.0" stroke="#1b1b1b" stroke-width="1.7" opacity="0.52"/><path d="M415.0 390.0 C414.5 391.7 413.5 396.3 411.8 400.0 C410.1 403.7 406.6 408.5 405.0 412.0 C403.4 415.5 402.6 418.1 401.9 420.9 C401.1 423.7 400.7 427.6 400.5 429.0" stroke="#383838" stroke-width="1.9" opacity="0.68"/><path d="M407.0 434.0 C407.7 435.5 409.4 440.1 411.0 443.0 C412.6 445.9 415.0 448.9 416.7 451.7 C418.4 454.5 419.8 457.1 421.0 460.0 C422.2 462.9 423.5 467.4 424.0 468.9" stroke="#454545" stroke-width="2.0" opacity="0.75"/><path d="M428.0 376.0 C426.3 379.7 421.3 389.8 418.0 398.0 C414.7 406.2 410.3 418.0 408.0 425.0 C405.7 432.0 403.3 434.5 404.0 440.0 C404.7 445.5 410.7 455.0 412.0 458.0" stroke="#1b1b1b" stroke-width="1.6" opacity="0.52"/><path d="M440.0 380.0 C438.0 384.2 431.3 396.7 428.0 405.0 C424.7 413.3 421.7 421.7 420.0 430.0 C418.3 438.3 417.3 448.3 418.0 455.0 C418.7 461.7 423.0 467.5 424.0 470.0" stroke="#1b1b1b" stroke-width="1.6" opacity="0.49"/><path d="M452.0 376.0 C450.0 380.3 443.7 392.7 440.0 402.0 C436.3 411.3 432.3 423.0 430.0 432.0 C427.7 441.0 426.7 452.0 426.0 456.0" stroke="#1b1b1b" stroke-width="1.6" opacity="0.49"/><path d="M396.0 392.0 C395.0 394.2 391.7 401.0 390.0 405.0 C388.3 409.0 386.7 414.2 386.0 416.0" stroke="#151515" stroke-width="1.4" opacity="0.45"/><path d="M615.4 372.6 C614.8 373.8 612.8 377.6 612.0 380.0 C611.2 382.4 610.9 384.5 610.6 387.3 C610.3 390.1 610.4 393.8 610.4 397.0 C610.4 400.2 610.3 403.2 610.6 406.5 C610.9 409.8 611.3 413.6 612.0 417.0 C612.7 420.4 613.8 424.1 615.0 427.0 C616.2 429.9 617.8 432.1 619.5 434.5 C621.2 436.9 623.2 439.3 625.0 441.2 C626.8 443.1 628.6 444.6 630.5 446.0 C632.4 447.4 634.7 448.8 636.6 449.9 C638.5 450.9 640.1 451.6 642.0 452.3 C643.9 453.0 645.9 453.5 648.2 453.9 C650.5 454.3 653.4 454.6 656.0 454.6 C658.6 454.6 661.1 454.3 663.6 453.7 C666.1 453.1 668.8 452.1 671.0 451.0 C673.2 449.9 675.2 448.6 677.0 447.0 C678.8 445.4 680.5 443.4 682.0 441.5 C683.5 439.6 684.7 437.5 685.7 435.4 C686.8 433.3 687.6 431.2 688.3 429.0 C688.9 426.8 689.5 424.2 689.6 422.0 C689.8 419.8 689.5 417.9 689.2 416.0 C688.9 414.1 688.4 412.5 687.7 410.4 C687.0 408.3 686.1 405.8 685.0 403.5 C683.9 401.2 682.4 399.0 681.0 396.9 C679.6 394.8 678.1 392.9 676.5 391.0 C674.9 389.1 673.0 387.2 671.3 385.3 C669.6 383.4 668.1 381.4 666.5 379.5 C664.9 377.6 662.5 374.6 661.7 373.6" stroke="#787878" stroke-width="2.6" opacity="0.75"/><path d="M610.6 411.4 C610.4 412.5 609.2 415.7 609.3 418.0 C609.4 420.3 610.1 422.8 611.0 425.0 C611.9 427.2 613.1 429.5 614.5 431.0 C615.9 432.5 618.3 434.2 619.3 434.0 C620.3 433.8 620.8 431.7 620.5 430.0 C620.2 428.3 618.4 426.2 617.5 424.0 C616.6 421.8 615.8 419.2 615.0 417.0 C614.2 414.8 612.9 411.6 612.5 410.5" stroke="#787878" stroke-width="2.0" opacity="0.75"/><path d="M620.2 382.5 C620.8 382.0 622.5 380.2 624.0 379.5 C625.5 378.8 627.2 378.6 628.9 378.4 C630.6 378.2 632.4 378.1 634.0 378.3 C635.6 378.5 638.5 379.2 638.5 379.8 C638.5 380.4 635.8 381.5 634.0 382.0 C632.2 382.5 629.8 382.2 628.0 382.6 C626.2 383.0 623.8 384.2 623.0 384.5" stroke="#808080" stroke-width="2.4" opacity="0.75"/><path d="M621.2 387.6 C622.0 387.3 624.4 386.0 626.0 385.6 C627.6 385.2 629.1 385.3 630.8 385.3 C632.5 385.3 634.4 385.4 636.0 385.8 C637.6 386.2 639.8 387.3 640.5 387.6" stroke="#808080" stroke-width="2.2" opacity="0.75"/><path d="M627.0 393.5 C627.1 392.4 628.5 390.8 629.5 390.0 C630.5 389.2 631.8 388.9 633.0 389.0 C634.2 389.1 635.6 389.8 636.5 390.5 C637.4 391.2 637.7 391.9 638.5 393.5 C639.3 395.1 641.6 398.6 641.4 399.8 C641.1 401.0 638.4 400.7 637.0 400.5 C635.6 400.3 634.1 399.5 632.8 398.8 C631.5 398.1 630.0 397.4 629.0 396.5 C628.0 395.6 626.9 394.6 627.0 393.5Z" stroke="#808080" stroke-width="2.2" opacity="0.75"/><path d="M647.2 401.7 C647.1 400.2 648.3 397.6 649.5 396.0 C650.7 394.4 652.7 392.8 654.5 392.0 C656.3 391.2 658.8 391.1 660.5 391.5 C662.2 391.9 664.0 393.2 664.8 394.5 C665.6 395.8 666.0 397.5 665.5 399.0 C665.0 400.5 663.7 402.3 662.0 403.5 C660.3 404.7 657.5 405.8 655.5 406.0 C653.5 406.2 651.4 405.7 650.0 405.0 C648.6 404.3 647.3 403.2 647.2 401.7Z" stroke="#808080" stroke-width="2.4" opacity="0.75"/><path d="M652.0 399.5 C651.8 398.4 654.2 396.5 655.5 396.0 C656.8 395.5 659.2 395.8 660.0 396.5 C660.8 397.2 661.1 399.0 660.5 400.0 C659.9 401.0 657.9 402.6 656.5 402.5 C655.1 402.4 652.2 400.6 652.0 399.5Z" stroke="#808080" stroke-width="1.9" opacity="0.75"/><path d="M626.2 419.0 C626.1 417.1 626.3 413.9 627.2 412.0 C628.1 410.1 629.9 408.2 631.5 407.3 C633.1 406.4 635.5 406.3 637.0 406.8 C638.5 407.3 640.1 408.8 640.8 410.5 C641.5 412.2 641.5 415.0 641.0 417.0 C640.5 419.0 639.0 421.2 637.5 422.5 C636.0 423.8 633.6 424.8 632.0 425.0 C630.4 425.2 628.8 424.5 627.8 423.5 C626.8 422.5 626.3 420.9 626.2 419.0Z" stroke="#808080" stroke-width="2.4" opacity="0.75"/><path d="M630.3 417.0 C630.0 415.8 631.5 413.3 632.5 412.5 C633.5 411.7 635.7 411.4 636.5 412.0 C637.3 412.6 637.7 414.8 637.3 416.0 C636.9 417.2 635.2 419.3 634.0 419.5 C632.8 419.7 630.5 418.2 630.3 417.0Z" stroke="#808080" stroke-width="1.9" opacity="0.75"/><path d="M641.0 404.0 C641.7 404.6 643.9 406.2 645.0 407.5 C646.1 408.8 647.1 411.2 647.5 412.0" stroke="#757575" stroke-width="1.9" opacity="0.75"/><path d="M663.6 431.6 C664.7 431.1 667.8 429.8 670.0 428.5 C672.2 427.2 674.5 425.8 677.0 424.0 C679.5 422.2 683.5 419.0 684.8 418.0" stroke="#808080" stroke-width="2.2" opacity="0.75"/><path d="M655.0 437.0 C656.5 436.8 661.0 437.0 664.0 436.0 C667.0 435.0 670.2 432.9 673.0 431.0 C675.8 429.1 679.7 425.6 681.0 424.5" stroke="#757575" stroke-width="1.9" opacity="0.75"/><path d="M645.0 440.0 C646.7 440.4 651.5 442.3 655.0 442.5 C658.5 442.7 662.5 442.2 666.0 441.0 C669.5 439.8 674.3 436.0 676.0 435.0" stroke="#757575" stroke-width="1.7" opacity="0.75"/><path d="M636.0 444.0 C638.0 444.8 644.0 447.7 648.0 448.5 C652.0 449.3 656.3 449.6 660.0 449.0 C663.7 448.4 668.3 445.7 670.0 445.0" stroke="#757575" stroke-width="1.6" opacity="0.75"/><path d="M552.3 373.0 C554.6 373.5 561.2 374.9 566.0 376.0 C570.8 377.1 576.0 378.1 581.0 379.3 C586.0 380.6 591.6 382.1 596.0 383.5 C600.4 384.9 605.7 386.8 607.6 387.5" stroke="#6a6a6a" stroke-width="2.2" opacity="0.75"/><path d="M560.0 372.5 C563.3 372.8 573.7 373.6 580.0 374.5 C586.3 375.4 592.8 376.6 598.0 378.0 C603.2 379.4 608.8 382.2 611.0 383.0" stroke="#757575" stroke-width="1.9" opacity="0.75"/><path d="M575.0 372.5 C577.8 372.8 586.8 373.2 592.0 374.0 C597.2 374.8 602.3 376.0 606.0 377.0 C609.7 378.0 612.7 379.5 614.0 380.0" stroke="#757575" stroke-width="1.7" opacity="0.75"/><path d="M658.9 372.6 C660.4 374.1 664.9 378.4 668.0 381.5 C671.1 384.6 674.5 387.8 677.8 391.4 C681.1 395.0 684.6 399.0 688.0 403.0 C691.4 407.0 694.7 411.7 698.0 415.4 C701.3 419.1 704.7 422.1 708.0 425.0 C711.3 427.9 715.2 430.2 718.0 433.0 C720.8 435.8 722.9 438.9 725.0 442.0 C727.1 445.1 728.2 447.4 730.7 451.9 C733.2 456.4 736.6 463.0 740.0 469.0 C743.4 475.0 749.0 484.8 750.8 488.0" stroke="#737373" stroke-width="2.6" opacity="0.75"/><path d="M685.3 440.6 C687.1 442.7 692.2 448.8 696.0 453.0 C699.8 457.2 704.7 461.8 708.0 465.8 C711.3 469.8 713.5 473.3 716.0 477.0 C718.5 480.7 721.8 486.2 723.0 488.0" stroke="#737373" stroke-width="2.3" opacity="0.75"/><path d="M690.4 423.0 C692.3 425.0 697.8 430.8 702.0 435.0 C706.2 439.2 711.1 442.7 715.6 448.0 C720.1 453.3 724.4 460.3 729.0 467.0 C733.6 473.7 740.9 484.5 743.3 488.0" stroke="#4b4b4b" stroke-width="2.0" opacity="0.75"/><path d="M686.0 430.0 C688.3 432.7 695.7 441.0 700.0 446.0 C704.3 451.0 708.0 454.7 712.0 460.0 C716.0 465.3 720.8 473.3 724.0 478.0 C727.2 482.7 729.8 486.3 731.0 488.0" stroke="#4b4b4b" stroke-width="1.9" opacity="0.68"/></g><path d="M31.0 347.8 C31.1 350.7 31.1 354.5 31.6 365.0 C32.1 375.5 33.4 397.7 34.3 411.0 C35.2 424.3 35.9 432.2 37.0 445.0 C38.1 457.8 40.5 480.8 41.2 488.0" stroke="url(#pg2)" stroke-width="2.6" opacity="0.6" filter="url(#b1)"/><path d="M35.9 365.6 C36.3 370.5 37.4 384.8 38.5 395.0 C39.6 405.2 41.1 417.0 42.4 427.0 C43.6 437.0 44.5 444.8 46.0 455.0 C47.5 465.2 50.4 482.5 51.3 488.0" stroke="url(#pg2)" stroke-width="2.4" opacity="0.5" filter="url(#b1)"/><path d="M31.0 347.8 C31.1 350.7 31.1 354.5 31.6 365.0 C32.1 375.5 33.4 397.7 34.3 411.0 C35.2 424.3 35.9 432.2 37.0 445.0 C38.1 457.8 40.5 480.8 41.2 488.0" stroke="url(#pg)" stroke-width="1.5"/><path d="M35.9 365.6 C36.3 370.5 37.4 384.8 38.5 395.0 C39.6 405.2 41.1 417.0 42.4 427.0 C43.6 437.0 44.5 444.8 46.0 455.0 C47.5 465.2 50.4 482.5 51.3 488.0" stroke="url(#pg3)" stroke-width="1.2" opacity="0.9"/><g><path d="M303.4 374.0 C300.7 374.2 293.1 373.6 287.0 375.0 C280.9 376.4 274.0 380.3 266.5 382.2 C259.0 384.1 249.5 385.7 242.0 386.3 C234.5 386.9 230.1 386.9 221.5 385.9 C212.9 384.9 200.9 382.3 190.7 380.2 C180.4 378.1 168.9 375.2 160.0 373.0 C151.1 370.8 144.2 367.8 137.0 367.0 C129.8 366.2 119.9 367.8 116.5 368.0" stroke="#c5c5c5" stroke-width="1.2" opacity="1.00"/><path d="M115.5 338.4 C116.1 338.4 117.6 338.4 119.0 338.6 C120.4 338.9 120.8 339.1 123.8 339.9 C126.8 340.7 131.2 342.7 137.2 343.6 C143.1 344.5 150.8 345.0 159.5 345.1 C168.2 345.2 179.1 344.4 189.2 344.3 C199.3 344.2 210.7 344.5 220.0 344.3 C229.3 344.1 237.9 343.5 245.0 343.2 C252.1 342.9 257.5 343.0 262.5 342.3 C267.5 341.6 270.1 339.9 274.8 339.2 C279.6 338.5 288.3 338.4 291.0 338.2" stroke="#787878" stroke-width="0.9" opacity="0.90"/><path d="M117.8 347.3 C119.8 347.7 125.5 348.6 130.0 349.5 C134.5 350.4 137.2 351.2 144.6 352.5 C152.0 353.8 161.7 355.9 174.3 357.0 C186.9 358.1 207.1 359.4 220.0 359.2 C232.9 359.0 244.2 356.8 252.0 355.8 C259.8 354.9 261.0 353.7 266.5 353.5 C272.0 353.3 279.5 354.0 285.0 354.5 C290.5 355.0 296.9 356.2 299.3 356.6" stroke="#939393" stroke-width="1.0" opacity="1.00"/><path d="M129.7 346.8 C133.1 347.3 142.4 348.8 150.0 350.0 C157.6 351.2 165.8 353.1 175.0 354.0 C184.2 354.9 200.0 355.2 205.0 355.5" stroke="#787878" stroke-width="0.9" opacity="0.80"/><path d="M252.0 343.0 C253.8 342.9 258.7 342.9 262.5 342.3 C266.3 341.7 270.1 339.9 274.8 339.2 C279.6 338.5 288.3 338.4 291.0 338.2" stroke="#bdbdbd" stroke-width="1.1" opacity="1.00"/><path d="M262.0 355.5 C264.2 355.2 270.7 354.1 275.0 354.0 C279.3 353.9 283.9 354.6 288.0 355.0 C292.1 355.4 297.4 356.3 299.3 356.6" stroke="#c5c5c5" stroke-width="1.2" opacity="1.00"/><path d="M272.0 341.0 C271.0 342.5 268.3 346.5 266.0 350.0 C263.7 353.5 260.7 358.0 258.0 362.0 C255.3 366.0 251.8 370.3 250.0 374.0 C248.2 377.7 247.5 382.3 247.0 384.0" stroke="#535353" stroke-width="0.8" opacity="0.70"/><path d="M274.6 266.0 C275.0 268.7 276.1 278.4 277.0 282.4 C277.9 286.4 278.8 286.2 279.9 290.0 C281.0 293.8 282.2 300.6 283.6 305.0 C285.0 309.4 286.4 310.6 288.0 316.6 C289.6 322.6 291.0 333.3 293.2 341.2 C295.4 349.1 298.9 355.2 301.4 363.8 C303.9 372.4 306.4 383.7 308.4 392.6 C310.4 401.5 312.2 409.4 313.4 417.2 C314.6 425.0 314.4 432.8 315.8 439.3 C317.2 445.9 319.5 451.2 322.0 456.5 C324.5 461.8 327.5 466.1 330.6 471.3 C333.7 476.6 338.9 485.2 340.5 488.0" stroke="#e0e0e0" stroke-width="1.2" opacity="1.00"/><path d="M300.8 239.8 C299.2 240.2 294.0 240.9 291.0 242.0 C288.0 243.1 284.2 245.6 282.8 246.3" stroke="#3b3b3b" stroke-width="0.8" opacity="0.70"/><path d="M282.8 246.3 L276.2 256.1" stroke="#616161" stroke-width="0.9" opacity="1.00"/><path d="M276.2 256.1 L274.6 266.0" stroke="#b0b0b0" stroke-width="1.1" opacity="1.00"/><path d="M305.0 281.0 C305.7 281.2 307.5 281.6 309.0 282.2 C310.5 282.8 312.2 283.8 314.0 284.6 C315.8 285.5 318.8 286.9 319.7 287.3" stroke="#ffffff" stroke-width="1.4" opacity="1.00"/><path d="M320.0 243.0 C317.0 243.4 307.2 244.0 302.0 245.5 C296.8 247.0 292.5 249.1 289.0 252.0 C285.5 254.9 282.6 258.7 281.0 263.0 C279.4 267.3 279.8 275.5 279.5 278.0" stroke="#454545" stroke-width="0.9" opacity="0.80"/><path d="M320.0 250.0 C317.3 250.2 308.3 250.3 304.0 251.5 C299.7 252.7 296.8 254.4 294.0 257.0 C291.2 259.6 288.4 262.8 287.0 267.0 C285.6 271.2 285.3 277.2 285.5 282.0 C285.7 286.8 287.6 293.7 288.0 296.0" stroke="#585858" stroke-width="0.9" opacity="0.80"/><path d="M320.0 258.0 C317.7 258.2 309.8 257.8 306.0 259.0 C302.2 260.2 299.3 262.3 297.0 265.0 C294.7 267.7 292.7 270.8 292.0 275.0 C291.3 279.2 292.2 285.2 293.0 290.0 C293.8 294.8 296.3 301.7 297.0 304.0" stroke="#454545" stroke-width="0.8" opacity="0.75"/><path d="M296.0 250.5 C297.2 250.2 300.5 248.7 303.0 248.5 C305.5 248.3 309.7 249.3 311.0 249.5" stroke="#838383" stroke-width="1.2" opacity="1.00"/><path d="M291.0 268.5 C292.0 268.7 295.0 268.9 297.0 269.5 C299.0 270.1 302.0 271.6 303.0 272.0" stroke="#7e7e7e" stroke-width="1.1" opacity="1.00"/><path d="M300.0 276.0 C301.3 276.5 305.3 277.5 308.0 279.0 C310.7 280.5 314.0 283.2 316.0 285.0 C318.0 286.8 319.3 289.2 320.0 290.0" stroke="#4d4d4d" stroke-width="0.8" opacity="0.80"/><path d="M296.0 296.0 C297.0 298.7 300.3 306.3 302.0 312.0 C303.7 317.7 304.7 323.7 306.0 330.0 C307.3 336.3 308.5 343.7 310.0 350.0 C311.5 356.3 314.2 365.0 315.0 368.0" stroke="#454545" stroke-width="0.8" opacity="0.70"/><path d="M305.0 300.0 C306.0 303.0 309.3 311.7 311.0 318.0 C312.7 324.3 313.7 331.7 315.0 338.0 C316.3 344.3 318.3 353.0 319.0 356.0" stroke="#3f3f3f" stroke-width="0.8" opacity="0.65"/><path d="M289.0 300.0 C289.8 303.0 292.3 311.7 294.0 318.0 C295.7 324.3 297.2 331.3 299.0 338.0 C300.8 344.7 304.0 354.7 305.0 358.0" stroke="#454545" stroke-width="0.8" opacity="0.65"/><path d="M60.2 348.7 C60.8 347.7 62.0 344.4 63.5 342.5 C65.0 340.6 66.7 338.9 69.4 337.6 C72.2 336.4 76.2 335.6 80.0 335.0 C83.8 334.4 88.3 334.1 92.0 334.0 C95.7 333.9 99.1 334.2 102.0 334.6 C104.9 335.0 108.3 336.1 109.6 336.4" stroke="#bdbdbd" stroke-width="1.0" opacity="1.00"/><path d="M109.8 336.4 C109.8 338.7 109.8 345.4 109.8 350.0 C109.8 354.6 109.8 361.7 109.8 364.0" stroke="#b2b2b2" stroke-width="0.9" opacity="1.00"/><path d="M115.5 338.4 C115.5 340.7 115.2 347.0 115.4 352.0 C115.6 357.0 116.3 365.5 116.5 368.2" stroke="#dadada" stroke-width="1.1" opacity="1.00"/><path d="M60.2 348.7 C61.5 349.7 65.1 352.8 68.0 354.5 C70.9 356.2 73.9 357.6 77.6 359.0 C81.3 360.4 85.8 361.8 90.0 363.0 C94.2 364.2 98.6 365.1 103.0 366.0 C107.4 366.9 114.2 367.8 116.5 368.2" stroke="#ffffff" stroke-width="1.8" opacity="1.00"/><path d="M31.5 362.0 C33.8 362.3 39.4 363.2 45.0 363.6 C50.6 364.0 59.5 364.0 65.3 364.2 C71.1 364.4 75.0 364.6 80.0 365.0 C85.0 365.4 88.9 366.0 95.0 366.5 C101.1 367.0 112.9 367.9 116.5 368.2" stroke="#b0b0b0" stroke-width="1.0" opacity="1.00"/><path d="M34.0 343.5 C34.3 343.4 35.1 342.9 35.6 342.8 C36.1 342.8 36.8 343.1 37.0 343.2" stroke="#787878" stroke-width="1.1" opacity="1.00"/><path d="M64.0 346.0 C65.3 345.2 68.7 342.7 72.0 341.5 C75.3 340.3 79.8 339.2 84.0 339.0 C88.2 338.8 93.0 339.0 97.0 340.0 C101.0 341.0 106.2 344.2 108.0 345.0" stroke="#7e7e7e" stroke-width="0.8" opacity="0.85"/><path d="M84.0 347.0 C85.3 346.8 89.3 345.9 92.0 346.0 C94.7 346.1 97.5 346.7 100.0 347.5 C102.5 348.3 105.8 350.4 107.0 351.0" stroke="#b5b5b5" stroke-width="1.2" opacity="1.00"/><path d="M70.0 352.0 C72.5 351.3 80.3 348.0 85.0 348.0 C89.7 348.0 94.5 350.0 98.0 352.0 C101.5 354.0 104.7 358.7 106.0 360.0" stroke="#a0a0a0" stroke-width="0.7" opacity="0.80"/><path d="M76.0 357.0 C78.0 356.3 84.2 352.8 88.0 353.0 C91.8 353.2 97.2 357.2 99.0 358.0" stroke="#aaaaaa" stroke-width="0.7" opacity="0.80"/><path d="M340.4 372.0 C340.4 376.2 339.2 392.2 340.4 397.5 C341.6 402.8 345.1 402.1 347.8 403.7 C350.5 405.3 354.4 405.8 356.4 407.3 C358.4 408.8 359.0 410.6 360.0 412.5 C361.0 414.4 363.1 415.6 362.5 418.4 C361.9 421.2 358.2 425.6 356.4 429.5 C354.6 433.4 352.7 438.1 351.5 441.8 C350.3 445.5 348.8 447.5 349.0 451.6 C349.2 455.7 350.9 461.1 352.7 466.4 C354.5 471.7 358.4 480.0 360.0 483.6 C361.6 487.2 362.1 487.3 362.5 488.0" stroke="#dadada" stroke-width="1.1" opacity="1.00"/><path d="M313.4 420.9 C315.5 419.8 321.7 416.7 326.0 414.0 C330.3 411.3 337.0 406.4 339.2 404.9" stroke="#c0c0c0" stroke-width="1.1" opacity="1.00"/><path d="M314.6 427.0 C316.5 426.1 322.1 423.6 326.0 421.5 C329.9 419.4 336.0 415.8 338.0 414.7" stroke="#b5b5b5" stroke-width="1.0" opacity="1.00"/><path d="M340.4 400.0 C340.1 402.5 339.3 410.1 338.5 415.0 C337.7 419.9 336.4 425.3 335.5 429.5 C334.6 433.7 333.8 436.8 333.0 440.0 C332.2 443.2 331.2 445.8 330.6 449.0 C330.0 452.2 329.5 457.3 329.3 459.0" stroke="#ffffff" stroke-width="1.2" opacity="1.00"/><path d="M341.0 405.0 C342.8 405.7 349.0 407.2 352.0 409.0 C355.0 410.8 357.8 414.8 359.0 416.0" stroke="#cdcdcd" stroke-width="0.9" opacity="1.00"/><path d="M339.0 414.0 C340.8 414.7 347.0 416.0 350.0 418.0 C353.0 420.0 355.8 424.7 357.0 426.0" stroke="#cdcdcd" stroke-width="0.9" opacity="1.00"/><path d="M337.0 424.0 C338.5 424.8 343.3 426.8 346.0 429.0 C348.7 431.2 351.8 435.7 353.0 437.0" stroke="#cdcdcd" stroke-width="0.9" opacity="1.00"/><path d="M335.0 434.0 C336.2 434.8 339.7 437.0 342.0 439.0 C344.3 441.0 347.8 444.8 349.0 446.0" stroke="#cdcdcd" stroke-width="0.9" opacity="1.00"/><path d="M333.0 444.0 C334.0 444.8 337.0 447.2 339.0 449.0 C341.0 450.8 344.0 454.0 345.0 455.0" stroke="#bdbdbd" stroke-width="0.9" opacity="1.00"/><path d="M347.0 405.0 C346.5 407.7 345.2 415.7 344.0 421.0 C342.8 426.3 341.5 431.8 340.0 437.0 C338.5 442.2 335.8 449.5 335.0 452.0" stroke="#e6e6e6" stroke-width="0.9" opacity="1.00"/><path d="M354.0 409.0 C353.5 411.3 352.3 418.2 351.0 423.0 C349.7 427.8 347.7 433.2 346.0 438.0 C344.3 442.8 341.8 449.7 341.0 452.0" stroke="#e6e6e6" stroke-width="0.9" opacity="1.00"/><path d="M359.0 416.0 C358.3 418.0 356.5 424.0 355.0 428.0 C353.5 432.0 350.8 438.0 350.0 440.0" stroke="#bdbdbd" stroke-width="0.9" opacity="1.00"/><path d="M329.3 459.0 C329.9 460.8 331.6 466.5 333.0 470.0 C334.4 473.5 336.7 477.0 338.0 480.0 C339.3 483.0 340.5 486.7 341.0 488.0" stroke="#939393" stroke-width="0.9" opacity="1.00"/><path d="M341.0 463.0 C341.8 464.5 344.2 467.8 346.0 472.0 C347.8 476.2 351.0 485.3 352.0 488.0" stroke="#838383" stroke-width="0.8" opacity="0.90"/><path d="M340.4 378.5 C342.8 378.6 348.7 378.9 355.0 379.2 C361.3 379.5 374.4 380.3 378.3 380.5" stroke="#484848" stroke-width="0.9" opacity="0.85"/><path d="M465.0 372.8 C462.8 377.0 456.0 389.7 452.0 398.0 C448.0 406.3 444.3 414.0 441.0 422.7 C437.7 431.4 434.8 441.4 432.0 450.0 C429.2 458.6 425.3 470.0 424.0 474.0" stroke="#838383" stroke-width="0.9" opacity="1.00"/><path d="M469.5 371.4 C467.1 376.5 459.2 392.2 455.0 402.0 C450.8 411.8 448.2 420.0 444.0 430.0 C439.8 440.0 433.8 452.3 430.0 462.0 C426.2 471.7 422.5 483.7 421.0 488.0" stroke="#505050" stroke-width="0.8" opacity="0.80"/><path d="M483.7 372.8 C482.1 378.2 477.4 393.0 474.0 405.0 C470.6 417.0 466.6 431.2 463.0 445.0 C459.4 458.8 454.2 480.8 452.4 488.0" stroke="#484848" stroke-width="0.9" opacity="0.85"/><path d="M476.0 372.0 C474.3 376.7 469.3 389.3 466.0 400.0 C462.7 410.7 459.7 423.0 456.0 436.0 C452.3 449.0 446.0 471.0 444.0 478.0" stroke="#3b3b3b" stroke-width="0.8" opacity="0.70"/><path d="M415.0 390.0 C414.5 391.7 413.5 396.3 411.8 400.0 C410.1 403.7 406.6 408.5 405.0 412.0 C403.4 415.5 402.6 418.1 401.9 420.9 C401.1 423.7 400.7 427.6 400.5 429.0" stroke="#707070" stroke-width="0.9" opacity="0.90"/><path d="M407.0 434.0 C407.7 435.5 409.4 440.1 411.0 443.0 C412.6 445.9 415.0 448.9 416.7 451.7 C418.4 454.5 419.8 457.1 421.0 460.0 C422.2 462.9 423.5 467.4 424.0 468.9" stroke="#838383" stroke-width="0.9" opacity="1.00"/><path d="M428.0 376.0 C426.3 379.7 421.3 389.8 418.0 398.0 C414.7 406.2 410.3 418.0 408.0 425.0 C405.7 432.0 403.3 434.5 404.0 440.0 C404.7 445.5 410.7 455.0 412.0 458.0" stroke="#414141" stroke-width="0.7" opacity="0.70"/><path d="M440.0 380.0 C438.0 384.2 431.3 396.7 428.0 405.0 C424.7 413.3 421.7 421.7 420.0 430.0 C418.3 438.3 417.3 448.3 418.0 455.0 C418.7 461.7 423.0 467.5 424.0 470.0" stroke="#3b3b3b" stroke-width="0.7" opacity="0.65"/><path d="M452.0 376.0 C450.0 380.3 443.7 392.7 440.0 402.0 C436.3 411.3 432.3 423.0 430.0 432.0 C427.7 441.0 426.7 452.0 426.0 456.0" stroke="#414141" stroke-width="0.7" opacity="0.65"/><path d="M396.0 392.0 C395.0 394.2 391.7 401.0 390.0 405.0 C388.3 409.0 386.7 414.2 386.0 416.0" stroke="#343434" stroke-width="0.7" opacity="0.60"/><path d="M615.4 372.6 C614.8 373.8 612.8 377.6 612.0 380.0 C611.2 382.4 610.9 384.5 610.6 387.3 C610.3 390.1 610.4 393.8 610.4 397.0 C610.4 400.2 610.3 403.2 610.6 406.5 C610.9 409.8 611.3 413.6 612.0 417.0 C612.7 420.4 613.8 424.1 615.0 427.0 C616.2 429.9 617.8 432.1 619.5 434.5 C621.2 436.9 623.2 439.3 625.0 441.2 C626.8 443.1 628.6 444.6 630.5 446.0 C632.4 447.4 634.7 448.8 636.6 449.9 C638.5 450.9 640.1 451.6 642.0 452.3 C643.9 453.0 645.9 453.5 648.2 453.9 C650.5 454.3 653.4 454.6 656.0 454.6 C658.6 454.6 661.1 454.3 663.6 453.7 C666.1 453.1 668.8 452.1 671.0 451.0 C673.2 449.9 675.2 448.6 677.0 447.0 C678.8 445.4 680.5 443.4 682.0 441.5 C683.5 439.6 684.7 437.5 685.7 435.4 C686.8 433.3 687.6 431.2 688.3 429.0 C688.9 426.8 689.5 424.2 689.6 422.0 C689.8 419.8 689.5 417.9 689.2 416.0 C688.9 414.1 688.4 412.5 687.7 410.4 C687.0 408.3 686.1 405.8 685.0 403.5 C683.9 401.2 682.4 399.0 681.0 396.9 C679.6 394.8 678.1 392.9 676.5 391.0 C674.9 389.1 673.0 387.2 671.3 385.3 C669.6 383.4 668.1 381.4 666.5 379.5 C664.9 377.6 662.5 374.6 661.7 373.6" stroke="#e6e6e6" stroke-width="1.2" opacity="1.00"/><path d="M610.6 411.4 C610.4 412.5 609.2 415.7 609.3 418.0 C609.4 420.3 610.1 422.8 611.0 425.0 C611.9 427.2 613.1 429.5 614.5 431.0 C615.9 432.5 618.3 434.2 619.3 434.0 C620.3 433.8 620.8 431.7 620.5 430.0 C620.2 428.3 618.4 426.2 617.5 424.0 C616.6 421.8 615.8 419.2 615.0 417.0 C614.2 414.8 612.9 411.6 612.5 410.5" stroke="#dadada" stroke-width="0.9" opacity="1.00"/><path d="M620.2 382.5 C620.8 382.0 622.5 380.2 624.0 379.5 C625.5 378.8 627.2 378.6 628.9 378.4 C630.6 378.2 632.4 378.1 634.0 378.3 C635.6 378.5 638.5 379.2 638.5 379.8 C638.5 380.4 635.8 381.5 634.0 382.0 C632.2 382.5 629.8 382.2 628.0 382.6 C626.2 383.0 623.8 384.2 623.0 384.5" stroke="#ffffff" stroke-width="1.3" opacity="1.00"/><path d="M621.2 387.6 C622.0 387.3 624.4 386.0 626.0 385.6 C627.6 385.2 629.1 385.3 630.8 385.3 C632.5 385.3 634.4 385.4 636.0 385.8 C637.6 386.2 639.8 387.3 640.5 387.6" stroke="#e0e0e0" stroke-width="1.1" opacity="1.00"/><path d="M627.0 393.5 C627.1 392.4 628.5 390.8 629.5 390.0 C630.5 389.2 631.8 388.9 633.0 389.0 C634.2 389.1 635.6 389.8 636.5 390.5 C637.4 391.2 637.7 391.9 638.5 393.5 C639.3 395.1 641.6 398.6 641.4 399.8 C641.1 401.0 638.4 400.7 637.0 400.5 C635.6 400.3 634.1 399.5 632.8 398.8 C631.5 398.1 630.0 397.4 629.0 396.5 C628.0 395.6 626.9 394.6 627.0 393.5Z" stroke="#dadada" stroke-width="1.2" opacity="1.00"/><path d="M647.2 401.7 C647.1 400.2 648.3 397.6 649.5 396.0 C650.7 394.4 652.7 392.8 654.5 392.0 C656.3 391.2 658.8 391.1 660.5 391.5 C662.2 391.9 664.0 393.2 664.8 394.5 C665.6 395.8 666.0 397.5 665.5 399.0 C665.0 400.5 663.7 402.3 662.0 403.5 C660.3 404.7 657.5 405.8 655.5 406.0 C653.5 406.2 651.4 405.7 650.0 405.0 C648.6 404.3 647.3 403.2 647.2 401.7Z" stroke="#ffffff" stroke-width="1.3" opacity="1.00"/><path d="M652.0 399.5 C651.8 398.4 654.2 396.5 655.5 396.0 C656.8 395.5 659.2 395.8 660.0 396.5 C660.8 397.2 661.1 399.0 660.5 400.0 C659.9 401.0 657.9 402.6 656.5 402.5 C655.1 402.4 652.2 400.6 652.0 399.5Z" stroke="#dadada" stroke-width="1.0" opacity="1.00"/><path d="M626.2 419.0 C626.1 417.1 626.3 413.9 627.2 412.0 C628.1 410.1 629.9 408.2 631.5 407.3 C633.1 406.4 635.5 406.3 637.0 406.8 C638.5 407.3 640.1 408.8 640.8 410.5 C641.5 412.2 641.5 415.0 641.0 417.0 C640.5 419.0 639.0 421.2 637.5 422.5 C636.0 423.8 633.6 424.8 632.0 425.0 C630.4 425.2 628.8 424.5 627.8 423.5 C626.8 422.5 626.3 420.9 626.2 419.0Z" stroke="#ffffff" stroke-width="1.3" opacity="1.00"/><path d="M630.3 417.0 C630.0 415.8 631.5 413.3 632.5 412.5 C633.5 411.7 635.7 411.4 636.5 412.0 C637.3 412.6 637.7 414.8 637.3 416.0 C636.9 417.2 635.2 419.3 634.0 419.5 C632.8 419.7 630.5 418.2 630.3 417.0Z" stroke="#dadada" stroke-width="1.0" opacity="1.00"/><path d="M641.0 404.0 C641.7 404.6 643.9 406.2 645.0 407.5 C646.1 408.8 647.1 411.2 647.5 412.0" stroke="#aaaaaa" stroke-width="0.9" opacity="1.00"/><path d="M663.6 431.6 C664.7 431.1 667.8 429.8 670.0 428.5 C672.2 427.2 674.5 425.8 677.0 424.0 C679.5 422.2 683.5 419.0 684.8 418.0" stroke="#ededed" stroke-width="1.2" opacity="1.00"/><path d="M655.0 437.0 C656.5 436.8 661.0 437.0 664.0 436.0 C667.0 435.0 670.2 432.9 673.0 431.0 C675.8 429.1 679.7 425.6 681.0 424.5" stroke="#bdbdbd" stroke-width="0.9" opacity="1.00"/><path d="M645.0 440.0 C646.7 440.4 651.5 442.3 655.0 442.5 C658.5 442.7 662.5 442.2 666.0 441.0 C669.5 439.8 674.3 436.0 676.0 435.0" stroke="#aaaaaa" stroke-width="0.8" opacity="1.00"/><path d="M636.0 444.0 C638.0 444.8 644.0 447.7 648.0 448.5 C652.0 449.3 656.3 449.6 660.0 449.0 C663.7 448.4 668.3 445.7 670.0 445.0" stroke="#aaaaaa" stroke-width="0.8" opacity="1.00"/><path d="M552.3 373.0 C554.6 373.5 561.2 374.9 566.0 376.0 C570.8 377.1 576.0 378.1 581.0 379.3 C586.0 380.6 591.6 382.1 596.0 383.5 C600.4 384.9 605.7 386.8 607.6 387.5" stroke="#a0a0a0" stroke-width="0.9" opacity="1.00"/><path d="M560.0 372.5 C563.3 372.8 573.7 373.6 580.0 374.5 C586.3 375.4 592.8 376.6 598.0 378.0 C603.2 379.4 608.8 382.2 611.0 383.0" stroke="#c5c5c5" stroke-width="0.9" opacity="1.00"/><path d="M575.0 372.5 C577.8 372.8 586.8 373.2 592.0 374.0 C597.2 374.8 602.3 376.0 606.0 377.0 C609.7 378.0 612.7 379.5 614.0 380.0" stroke="#b5b5b5" stroke-width="0.8" opacity="1.00"/><path d="M658.9 372.6 C660.4 374.1 664.9 378.4 668.0 381.5 C671.1 384.6 674.5 387.8 677.8 391.4 C681.1 395.0 684.6 399.0 688.0 403.0 C691.4 407.0 694.7 411.7 698.0 415.4 C701.3 419.1 704.7 422.1 708.0 425.0 C711.3 427.9 715.2 430.2 718.0 433.0 C720.8 435.8 722.9 438.9 725.0 442.0 C727.1 445.1 728.2 447.4 730.7 451.9 C733.2 456.4 736.6 463.0 740.0 469.0 C743.4 475.0 749.0 484.8 750.8 488.0" stroke="#e0e0e0" stroke-width="1.2" opacity="1.00"/><path d="M685.3 440.6 C687.1 442.7 692.2 448.8 696.0 453.0 C699.8 457.2 704.7 461.8 708.0 465.8 C711.3 469.8 713.5 473.3 716.0 477.0 C718.5 480.7 721.8 486.2 723.0 488.0" stroke="#cdcdcd" stroke-width="1.0" opacity="1.00"/><path d="M690.4 423.0 C692.3 425.0 697.8 430.8 702.0 435.0 C706.2 439.2 711.1 442.7 715.6 448.0 C720.1 453.3 724.4 460.3 729.0 467.0 C733.6 473.7 740.9 484.5 743.3 488.0" stroke="#939393" stroke-width="0.9" opacity="1.00"/><path d="M686.0 430.0 C688.3 432.7 695.7 441.0 700.0 446.0 C704.3 451.0 708.0 454.7 712.0 460.0 C716.0 465.3 720.8 473.3 724.0 478.0 C727.2 482.7 729.8 486.3 731.0 488.0" stroke="#838383" stroke-width="0.8" opacity="0.90"/><path d="M655.0 372.6 C656.3 374.0 660.2 377.9 663.0 381.0 C665.8 384.1 669.0 387.5 672.0 391.0 C675.0 394.5 678.5 398.8 681.0 402.0 C683.5 405.2 685.5 407.7 687.0 410.0 C688.5 412.3 689.5 415.0 690.0 416.0" stroke="#fff" stroke-width="1.8" stroke-dasharray="1.4 2.2" opacity="0.9"/><path d="M70.0 355.5 C71.3 356.1 74.7 358.0 78.0 359.3 C81.3 360.6 85.8 362.1 90.0 363.2 C94.2 364.3 99.0 365.4 103.0 366.2 C107.0 367.0 112.2 367.7 114.0 368.0" stroke="#fff" stroke-width="1.6" stroke-dasharray="1.2 1.5" opacity="0.95"/></g></g></g></g>
</svg>
<div id="dlg">
  <div id="ttl"><span>颜色表</span>
    <svg width="12" height="12" viewBox="0 0 12 12"><path d="M1 1 L11 11 M11 1 L1 11" stroke="#fff" stroke-width="1.2" fill="none"/></svg>
  </div>
  <div class="lbl" style="left:27px;top:39px;">颜色表<span class="lat">(<u>T</u>):</span></div>
  <div id="sel"><div class="hl"><span>黑体</span></div>
    <svg width="10" height="6" viewBox="0 0 10 6"><path d="M0.5 0.5 L5 5 L9.5 0.5" stroke="#444" stroke-width="1.1" fill="none"/></svg>
  </div>
  <div id="grid"><svg width="254" height="254" viewBox="0 0 254 254"><rect x="0" y="0" width="14" height="14" fill="#000000"/><rect x="16" y="0" width="14" height="14" fill="#030000"/><rect x="32" y="0" width="14" height="14" fill="#060000"/><rect x="48" y="0" width="14" height="14" fill="#090000"/><rect x="64" y="0" width="14" height="14" fill="#0c0000"/><rect x="80" y="0" width="14" height="14" fill="#0f0000"/><rect x="96" y="0" width="14" height="14" fill="#120000"/><rect x="112" y="0" width="14" height="14" fill="#150000"/><rect x="128" y="0" width="14" height="14" fill="#180000"/><rect x="144" y="0" width="14" height="14" fill="#1b0000"/><rect x="160" y="0" width="14" height="14" fill="#1e0000"/><rect x="176" y="0" width="14" height="14" fill="#210000"/><rect x="192" y="0" width="14" height="14" fill="#240000"/><rect x="208" y="0" width="14" height="14" fill="#270000"/><rect x="224" y="0" width="14" height="14" fill="#2a0000"/><rect x="240" y="0" width="14" height="14" fill="#2d0000"/><rect x="0" y="16" width="14" height="14" fill="#300000"/><rect x="16" y="16" width="14" height="14" fill="#330000"/><rect x="32" y="16" width="14" height="14" fill="#360000"/><rect x="48" y="16" width="14" height="14" fill="#390000"/><rect x="64" y="16" width="14" height="14" fill="#3c0000"/><rect x="80" y="16" width="14" height="14" fill="#3f0000"/><rect x="96" y="16" width="14" height="14" fill="#420000"/><rect x="112" y="16" width="14" height="14" fill="#450000"/><rect x="128" y="16" width="14" height="14" fill="#480000"/><rect x="144" y="16" width="14" height="14" fill="#4b0000"/><rect x="160" y="16" width="14" height="14" fill="#4e0000"/><rect x="176" y="16" width="14" height="14" fill="#510000"/><rect x="192" y="16" width="14" height="14" fill="#540000"/><rect x="208" y="16" width="14" height="14" fill="#570000"/><rect x="224" y="16" width="14" height="14" fill="#5a0000"/><rect x="240" y="16" width="14" height="14" fill="#5d0000"/><rect x="0" y="32" width="14" height="14" fill="#600000"/><rect x="16" y="32" width="14" height="14" fill="#630000"/><rect x="32" y="32" width="14" height="14" fill="#660000"/><rect x="48" y="32" width="14" height="14" fill="#690000"/><rect x="64" y="32" width="14" height="14" fill="#6c0000"/><rect x="80" y="32" width="14" height="14" fill="#6f0000"/><rect x="96" y="32" width="14" height="14" fill="#720000"/><rect x="112" y="32" width="14" height="14" fill="#750000"/><rect x="128" y="32" width="14" height="14" fill="#780000"/><rect x="144" y="32" width="14" height="14" fill="#7b0000"/><rect x="160" y="32" width="14" height="14" fill="#7e0000"/><rect x="176" y="32" width="14" height="14" fill="#810000"/><rect x="192" y="32" width="14" height="14" fill="#840000"/><rect x="208" y="32" width="14" height="14" fill="#870000"/><rect x="224" y="32" width="14" height="14" fill="#8a0000"/><rect x="240" y="32" width="14" height="14" fill="#8d0000"/><rect x="0" y="48" width="14" height="14" fill="#900000"/><rect x="16" y="48" width="14" height="14" fill="#930000"/><rect x="32" y="48" width="14" height="14" fill="#960000"/><rect x="48" y="48" width="14" height="14" fill="#990000"/><rect x="64" y="48" width="14" height="14" fill="#9c0000"/><rect x="80" y="48" width="14" height="14" fill="#9f0000"/><rect x="96" y="48" width="14" height="14" fill="#a20000"/><rect x="112" y="48" width="14" height="14" fill="#a50000"/><rect x="128" y="48" width="14" height="14" fill="#a80000"/><rect x="144" y="48" width="14" height="14" fill="#ab0000"/><rect x="160" y="48" width="14" height="14" fill="#ae0000"/><rect x="176" y="48" width="14" height="14" fill="#b10000"/><rect x="192" y="48" width="14" height="14" fill="#b40000"/><rect x="208" y="48" width="14" height="14" fill="#b70000"/><rect x="224" y="48" width="14" height="14" fill="#ba0000"/><rect x="240" y="48" width="14" height="14" fill="#bd0000"/><rect x="0" y="64" width="14" height="14" fill="#c00000"/><rect x="16" y="64" width="14" height="14" fill="#c30000"/><rect x="32" y="64" width="14" height="14" fill="#c60000"/><rect x="48" y="64" width="14" height="14" fill="#c90000"/><rect x="64" y="64" width="14" height="14" fill="#cc0000"/><rect x="80" y="64" width="14" height="14" fill="#cf0000"/><rect x="96" y="64" width="14" height="14" fill="#d20000"/><rect x="112" y="64" width="14" height="14" fill="#d50000"/><rect x="128" y="64" width="14" height="14" fill="#d80000"/><rect x="144" y="64" width="14" height="14" fill="#db0000"/><rect x="160" y="64" width="14" height="14" fill="#de0000"/><rect x="176" y="64" width="14" height="14" fill="#e10000"/><rect x="192" y="64" width="14" height="14" fill="#e40000"/><rect x="208" y="64" width="14" height="14" fill="#e70000"/><rect x="224" y="64" width="14" height="14" fill="#ea0000"/><rect x="240" y="64" width="14" height="14" fill="#ed0000"/><rect x="0" y="80" width="14" height="14" fill="#f00000"/><rect x="16" y="80" width="14" height="14" fill="#f30000"/><rect x="32" y="80" width="14" height="14" fill="#f60000"/><rect x="48" y="80" width="14" height="14" fill="#f90000"/><rect x="64" y="80" width="14" height="14" fill="#fc0000"/><rect x="80" y="80" width="14" height="14" fill="#ff0000"/><rect x="96" y="80" width="14" height="14" fill="#ff0300"/><rect x="112" y="80" width="14" height="14" fill="#ff0600"/><rect x="128" y="80" width="14" height="14" fill="#ff0900"/><rect x="144" y="80" width="14" height="14" fill="#ff0c00"/><rect x="160" y="80" width="14" height="14" fill="#ff0f00"/><rect x="176" y="80" width="14" height="14" fill="#ff1200"/><rect x="192" y="80" width="14" height="14" fill="#ff1500"/><rect x="208" y="80" width="14" height="14" fill="#ff1800"/><rect x="224" y="80" width="14" height="14" fill="#ff1b00"/><rect x="240" y="80" width="14" height="14" fill="#ff1e00"/><rect x="0" y="96" width="14" height="14" fill="#ff2100"/><rect x="16" y="96" width="14" height="14" fill="#ff2400"/><rect x="32" y="96" width="14" height="14" fill="#ff2700"/><rect x="48" y="96" width="14" height="14" fill="#ff2a00"/><rect x="64" y="96" width="14" height="14" fill="#ff2d00"/><rect x="80" y="96" width="14" height="14" fill="#ff3000"/><rect x="96" y="96" width="14" height="14" fill="#ff3300"/><rect x="112" y="96" width="14" height="14" fill="#ff3600"/><rect x="128" y="96" width="14" height="14" fill="#ff3900"/><rect x="144" y="96" width="14" height="14" fill="#ff3c00"/><rect x="160" y="96" width="14" height="14" fill="#ff3f00"/><rect x="176" y="96" width="14" height="14" fill="#ff4200"/><rect x="192" y="96" width="14" height="14" fill="#ff4500"/><rect x="208" y="96" width="14" height="14" fill="#ff4800"/><rect x="224" y="96" width="14" height="14" fill="#ff4b00"/><rect x="240" y="96" width="14" height="14" fill="#ff4e00"/><rect x="0" y="112" width="14" height="14" fill="#ff5100"/><rect x="16" y="112" width="14" height="14" fill="#ff5400"/><rect x="32" y="112" width="14" height="14" fill="#ff5700"/><rect x="48" y="112" width="14" height="14" fill="#ff5a00"/><rect x="64" y="112" width="14" height="14" fill="#ff5d00"/><rect x="80" y="112" width="14" height="14" fill="#ff6000"/><rect x="96" y="112" width="14" height="14" fill="#ff6300"/><rect x="112" y="112" width="14" height="14" fill="#ff6600"/><rect x="128" y="112" width="14" height="14" fill="#ff6900"/><rect x="144" y="112" width="14" height="14" fill="#ff6c00"/><rect x="160" y="112" width="14" height="14" fill="#ff6f00"/><rect x="176" y="112" width="14" height="14" fill="#ff7200"/><rect x="192" y="112" width="14" height="14" fill="#ff7500"/><rect x="208" y="112" width="14" height="14" fill="#ff7800"/><rect x="224" y="112" width="14" height="14" fill="#ff7b00"/><rect x="240" y="112" width="14" height="14" fill="#ff7e00"/><rect x="0" y="128" width="14" height="14" fill="#ff8100"/><rect x="16" y="128" width="14" height="14" fill="#ff8400"/><rect x="32" y="128" width="14" height="14" fill="#ff8700"/><rect x="48" y="128" width="14" height="14" fill="#ff8a00"/><rect x="64" y="128" width="14" height="14" fill="#ff8d00"/><rect x="80" y="128" width="14" height="14" fill="#ff9000"/><rect x="96" y="128" width="14" height="14" fill="#ff9300"/><rect x="112" y="128" width="14" height="14" fill="#ff9600"/><rect x="128" y="128" width="14" height="14" fill="#ff9900"/><rect x="144" y="128" width="14" height="14" fill="#ff9c00"/><rect x="160" y="128" width="14" height="14" fill="#ff9f00"/><rect x="176" y="128" width="14" height="14" fill="#ffa200"/><rect x="192" y="128" width="14" height="14" fill="#ffa500"/><rect x="208" y="128" width="14" height="14" fill="#ffa800"/><rect x="224" y="128" width="14" height="14" fill="#ffab00"/><rect x="240" y="128" width="14" height="14" fill="#ffae00"/><rect x="0" y="144" width="14" height="14" fill="#ffb100"/><rect x="16" y="144" width="14" height="14" fill="#ffb400"/><rect x="32" y="144" width="14" height="14" fill="#ffb700"/><rect x="48" y="144" width="14" height="14" fill="#ffba00"/><rect x="64" y="144" width="14" height="14" fill="#ffbd00"/><rect x="80" y="144" width="14" height="14" fill="#ffc000"/><rect x="96" y="144" width="14" height="14" fill="#ffc300"/><rect x="112" y="144" width="14" height="14" fill="#ffc600"/><rect x="128" y="144" width="14" height="14" fill="#ffc900"/><rect x="144" y="144" width="14" height="14" fill="#ffcc00"/><rect x="160" y="144" width="14" height="14" fill="#ffcf00"/><rect x="176" y="144" width="14" height="14" fill="#ffd200"/><rect x="192" y="144" width="14" height="14" fill="#ffd500"/><rect x="208" y="144" width="14" height="14" fill="#ffd800"/><rect x="224" y="144" width="14" height="14" fill="#ffdb00"/><rect x="240" y="144" width="14" height="14" fill="#ffde00"/><rect x="0" y="160" width="14" height="14" fill="#ffe100"/><rect x="16" y="160" width="14" height="14" fill="#ffe400"/><rect x="32" y="160" width="14" height="14" fill="#ffe700"/><rect x="48" y="160" width="14" height="14" fill="#ffea00"/><rect x="64" y="160" width="14" height="14" fill="#ffed00"/><rect x="80" y="160" width="14" height="14" fill="#fff000"/><rect x="96" y="160" width="14" height="14" fill="#fff300"/><rect x="112" y="160" width="14" height="14" fill="#fff600"/><rect x="128" y="160" width="14" height="14" fill="#fff900"/><rect x="144" y="160" width="14" height="14" fill="#fffc00"/><rect x="160" y="160" width="14" height="14" fill="#ffff00"/><rect x="176" y="160" width="14" height="14" fill="#ffff03"/><rect x="192" y="160" width="14" height="14" fill="#ffff06"/><rect x="208" y="160" width="14" height="14" fill="#ffff09"/><rect x="224" y="160" width="14" height="14" fill="#ffff0c"/><rect x="240" y="160" width="14" height="14" fill="#ffff0f"/><rect x="0" y="176" width="14" height="14" fill="#ffff12"/><rect x="16" y="176" width="14" height="14" fill="#ffff15"/><rect x="32" y="176" width="14" height="14" fill="#ffff18"/><rect x="48" y="176" width="14" height="14" fill="#ffff1b"/><rect x="64" y="176" width="14" height="14" fill="#ffff1e"/><rect x="80" y="176" width="14" height="14" fill="#ffff21"/><rect x="96" y="176" width="14" height="14" fill="#ffff24"/><rect x="112" y="176" width="14" height="14" fill="#ffff27"/><rect x="128" y="176" width="14" height="14" fill="#ffff2a"/><rect x="144" y="176" width="14" height="14" fill="#ffff2d"/><rect x="160" y="176" width="14" height="14" fill="#ffff30"/><rect x="176" y="176" width="14" height="14" fill="#ffff33"/><rect x="192" y="176" width="14" height="14" fill="#ffff36"/><rect x="208" y="176" width="14" height="14" fill="#ffff39"/><rect x="224" y="176" width="14" height="14" fill="#ffff3c"/><rect x="240" y="176" width="14" height="14" fill="#ffff3f"/><rect x="0" y="192" width="14" height="14" fill="#ffff42"/><rect x="16" y="192" width="14" height="14" fill="#ffff45"/><rect x="32" y="192" width="14" height="14" fill="#ffff48"/><rect x="48" y="192" width="14" height="14" fill="#ffff4b"/><rect x="64" y="192" width="14" height="14" fill="#ffff4e"/><rect x="80" y="192" width="14" height="14" fill="#ffff51"/><rect x="96" y="192" width="14" height="14" fill="#ffff54"/><rect x="112" y="192" width="14" height="14" fill="#ffff57"/><rect x="128" y="192" width="14" height="14" fill="#ffff5a"/><rect x="144" y="192" width="14" height="14" fill="#ffff5d"/><rect x="160" y="192" width="14" height="14" fill="#ffff60"/><rect x="176" y="192" width="14" height="14" fill="#ffff63"/><rect x="192" y="192" width="14" height="14" fill="#ffff66"/><rect x="208" y="192" width="14" height="14" fill="#ffff69"/><rect x="224" y="192" width="14" height="14" fill="#ffff6c"/><rect x="240" y="192" width="14" height="14" fill="#ffff6f"/><rect x="0" y="208" width="14" height="14" fill="#ffff72"/><rect x="16" y="208" width="14" height="14" fill="#ffff75"/><rect x="32" y="208" width="14" height="14" fill="#ffff78"/><rect x="48" y="208" width="14" height="14" fill="#ffff7b"/><rect x="64" y="208" width="14" height="14" fill="#ffff7e"/><rect x="80" y="208" width="14" height="14" fill="#ffff81"/><rect x="96" y="208" width="14" height="14" fill="#ffff84"/><rect x="112" y="208" width="14" height="14" fill="#ffff87"/><rect x="128" y="208" width="14" height="14" fill="#ffff8a"/><rect x="144" y="208" width="14" height="14" fill="#ffff8d"/><rect x="160" y="208" width="14" height="14" fill="#ffff90"/><rect x="176" y="208" width="14" height="14" fill="#ffff93"/><rect x="192" y="208" width="14" height="14" fill="#ffff96"/><rect x="208" y="208" width="14" height="14" fill="#ffff99"/><rect x="224" y="208" width="14" height="14" fill="#ffff9c"/><rect x="240" y="208" width="14" height="14" fill="#ffff9f"/><rect x="0" y="224" width="14" height="14" fill="#ffffa2"/><rect x="16" y="224" width="14" height="14" fill="#ffffa5"/><rect x="32" y="224" width="14" height="14" fill="#ffffa8"/><rect x="48" y="224" width="14" height="14" fill="#ffffab"/><rect x="64" y="224" width="14" height="14" fill="#ffffae"/><rect x="80" y="224" width="14" height="14" fill="#ffffb1"/><rect x="96" y="224" width="14" height="14" fill="#ffffb4"/><rect x="112" y="224" width="14" height="14" fill="#ffffb7"/><rect x="128" y="224" width="14" height="14" fill="#ffffba"/><rect x="144" y="224" width="14" height="14" fill="#ffffbd"/><rect x="160" y="224" width="14" height="14" fill="#ffffc0"/><rect x="176" y="224" width="14" height="14" fill="#ffffc3"/><rect x="192" y="224" width="14" height="14" fill="#ffffc6"/><rect x="208" y="224" width="14" height="14" fill="#ffffc9"/><rect x="224" y="224" width="14" height="14" fill="#ffffcc"/><rect x="240" y="224" width="14" height="14" fill="#ffffcf"/><rect x="0" y="240" width="14" height="14" fill="#ffffd2"/><rect x="16" y="240" width="14" height="14" fill="#ffffd5"/><rect x="32" y="240" width="14" height="14" fill="#ffffd8"/><rect x="48" y="240" width="14" height="14" fill="#ffffdb"/><rect x="64" y="240" width="14" height="14" fill="#ffffde"/><rect x="80" y="240" width="14" height="14" fill="#ffffe1"/><rect x="96" y="240" width="14" height="14" fill="#ffffe4"/><rect x="112" y="240" width="14" height="14" fill="#ffffe7"/><rect x="128" y="240" width="14" height="14" fill="#ffffea"/><rect x="144" y="240" width="14" height="14" fill="#ffffed"/><rect x="160" y="240" width="14" height="14" fill="#fffff0"/><rect x="176" y="240" width="14" height="14" fill="#fffff3"/><rect x="192" y="240" width="14" height="14" fill="#fffff6"/><rect x="208" y="240" width="14" height="14" fill="#fffff9"/><rect x="224" y="240" width="14" height="14" fill="#fffffc"/><rect x="240" y="240" width="14" height="14" fill="#ffffff"/></svg></div>
  <div class="btn def" style="top:36px;">确定</div>
  <div class="btn" style="top:64px;">复位</div>
  <div class="btn" style="top:99px;line-height:19px;">载入<span class="lat">(<u>L</u>)...</span></div>
  <div class="btn" style="top:127px;line-height:19px;">存储<span class="lat">(<u>S</u>)...</span></div>
  <div id="chk"><svg width="11" height="11" viewBox="0 0 11 11"><path d="M1.5 5.5 L4.2 8.2 L9.5 2.5" stroke="#222" stroke-width="1.2" fill="none"/></svg></div>
  <div class="lbl" style="left:299px;top:160px;">预览<span class="lat">(<u>P</u>)</span></div>
  <svg style="position:absolute;left:287.3px;top:245.8px;overflow:visible" width="20" height="20" viewBox="0 0 20 20">
    <g transform="rotate(45 10 10)">
      <rect x="8.5" y="-0.4" width="3.4" height="7" rx="1.7" fill="#555"/>
      <rect x="6.4" y="5" width="7.6" height="2.7" fill="#3a3a3a"/>
      <path d="M8.5 7.6 L8.5 17.4 L10.2 19.9 L11.9 17.4 L11.9 7.6 Z" fill="#fff" stroke="#333" stroke-width="0.8"/>
    </g>
  </svg>
</div>
</body>
</html>
